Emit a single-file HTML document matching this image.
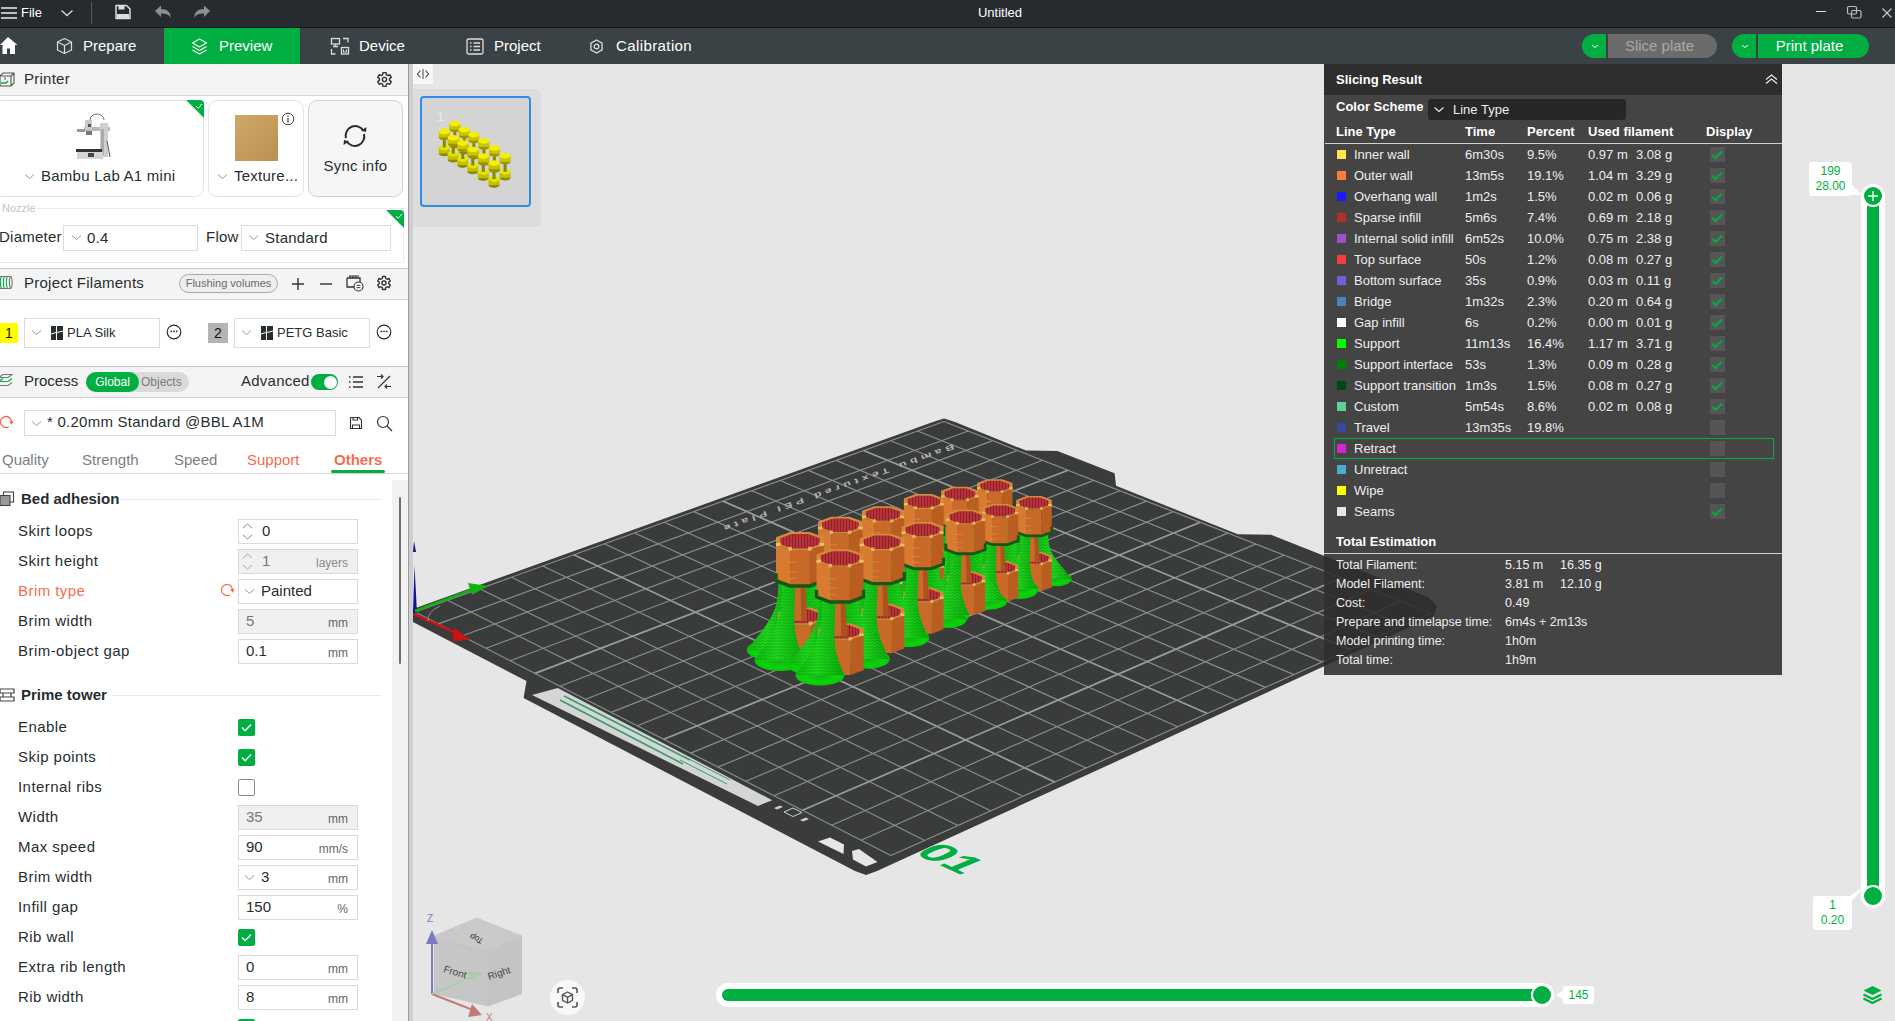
<!DOCTYPE html>
<html><head><meta charset="utf-8">
<style>
*{box-sizing:border-box;margin:0;padding:0}
html,body{width:1895px;height:1021px;overflow:hidden;background:#e6e6e6;font-family:"Liberation Sans",sans-serif;color:#262e30}
.a{position:absolute}
#title{left:0;top:0;width:1895px;height:28px;background:#262b2e;border-bottom:1px solid #121416}
#tabs{left:0;top:28px;width:1895px;height:36px;background:#3b4245}
#left{left:0;top:64px;width:408px;height:957px;background:#fff;overflow:hidden}
#sep{left:408px;top:64px;width:5px;height:957px;background:#cfcfcf;border-left:1px solid #9a9a9a}
#view{left:413px;top:64px;width:1482px;height:957px;background:#e6e6e6;overflow:hidden}
.tt{color:#fff;font-size:15px;top:0;line-height:36px}
.hdr{left:0;width:408px;height:31px;background:#f4f4f4;border-bottom:1px solid #d8d8d8;border-top:1px solid #e6e6e6}
.ht{left:24px;font-size:15px;line-height:30px;color:#262e30}

.t15{font-size:15px;color:#262e30;white-space:nowrap;letter-spacing:.25px}
.box{border:1px solid #dcdcdc;background:#fff}
.chev{position:absolute}
</style></head><body>
<div id="title" class="a">
<svg class="a" style="left:0;top:5px" width="18" height="16" viewBox="0 0 18 16"><path d="M1 3h16M1 8h16M1 13h16" stroke="#eee" stroke-width="1.6"/></svg>
<div class="a" style="left:21px;top:0;line-height:26px;font-size:13px;color:#fff">File</div>
<svg class="a" style="left:60px;top:8px" width="14" height="10" viewBox="0 0 14 10"><path d="M1.5 2.5l5.5 5 5.5-5" stroke="#ddd" stroke-width="1.3" fill="none"/></svg>
<div class="a" style="left:91px;top:2px;width:1px;height:22px;background:#555b5e"></div>
<svg class="a" style="left:114px;top:3px" width="18" height="18" viewBox="0 0 18 18"><path d="M2 2.5h10.5l3.5 3.5v9.5H2z" stroke="#ddd" stroke-width="1.5" fill="none" stroke-linejoin="round"/><rect x="4.5" y="3" width="6" height="3.5" fill="#ddd"/><rect x="3" y="11" width="12" height="4" fill="#ddd"/></svg>
<svg class="a" style="left:154px;top:5px" width="18" height="14" viewBox="0 0 18 14"><path d="M1 6l6-5.5v3.5c6 0 9.5 3 10 9-2-3.5-5-4.5-10-4.5V12z" fill="#8a8f91"/></svg>
<svg class="a" style="left:193px;top:5px" width="18" height="14" viewBox="0 0 18 14"><path d="M17 6l-6-5.5v3.5c-6 0-9.5 3-10 9 2-3.5 5-4.5 10-4.5V12z" fill="#8a8f91"/></svg>
<div class="a" style="left:950px;width:100px;text-align:center;top:0;line-height:25px;font-size:13px;color:#fff">Untitled</div>
<div class="a" style="left:1816px;top:11px;width:10px;height:1.3px;background:#ddd"></div>
<svg class="a" style="left:1845px;top:5px" width="18" height="15" viewBox="0 0 18 15"><rect x="2.5" y="1.5" width="9" height="7.5" rx="1.5" stroke="#bbb" stroke-width="1.2" fill="none"/><rect x="6.5" y="5.5" width="9.5" height="7.5" rx="1.5" stroke="#bbb" stroke-width="1.2" fill="none"/></svg>
<svg class="a" style="left:1881px;top:7px" width="12" height="12" viewBox="0 0 12 12"><path d="M1.5 1.5l9 9M10.5 1.5l-9 9" stroke="#ccc" stroke-width="1.1"/></svg>
</div>
<div id="tabs" class="a">
<svg class="a" style="left:0;top:8px" width="18" height="20" viewBox="0 0 18 20"><path d="M8 1L0 9h2.5v9H7v-5.5h3V18h5V9h2.5z" fill="#fff"/></svg>
<svg class="a" style="left:56px;top:9px" width="17" height="18" viewBox="0 0 17 18"><path d="M8.5 1.5l7 3.5v8l-7 3.5-7-3.5v-8zM1.5 5l7 3.5 7-3.5M8.5 8.5v8" stroke="#ddd" stroke-width="1.2" fill="none" stroke-linejoin="round"/></svg>
<div class="a tt" style="left:83px">Prepare</div>
<div class="a" style="left:164px;top:0;width:136px;height:36px;background:#00ae42"></div>
<svg class="a" style="left:191px;top:10px" width="17" height="17" viewBox="0 0 17 17"><path d="M8.5 1l7 4-7 4-7-4zM1.5 8.5l7 4 7-4M1.5 12l7 4 7-4" stroke="#fff" stroke-width="1.1" fill="none" stroke-linejoin="round"/></svg>
<div class="a tt" style="left:219px">Preview</div>
<svg class="a" style="left:330px;top:9px" width="20" height="18" viewBox="0 0 20 18"><rect x="1.5" y="1.5" width="8" height="5.5" stroke="#ddd" stroke-width="1.3" fill="none"/><path d="M5.5 7v2.5M3 9.5h5M13 1.5h5v4M1.5 12v5h4" stroke="#ddd" stroke-width="1.3" fill="none"/><rect x="11.5" y="10.5" width="7" height="6.5" stroke="#ddd" stroke-width="1.3" fill="none"/><path d="M13.5 12.5v2.5h3v-2.5" stroke="#ddd" stroke-width="1.1" fill="none"/></svg>
<div class="a tt" style="left:359px">Device</div>
<svg class="a" style="left:466px;top:10px" width="18" height="17" viewBox="0 0 18 17"><rect x="1" y="1" width="16" height="15" rx="1.5" stroke="#ddd" stroke-width="1.3" fill="none"/><path d="M4 5h1.5M4 8.5h1.5M4 12h1.5M7.5 5H14M7.5 8.5H14M7.5 12H14" stroke="#ddd" stroke-width="1.3"/></svg>
<div class="a tt" style="left:494px">Project</div>
<svg class="a" style="left:589px;top:11px" width="15" height="15" viewBox="0 0 15 15"><path d="M7.5 1l5.6 3.2v6.6L7.5 14 1.9 10.8V4.2z" stroke="#ddd" stroke-width="1.3" fill="none"/><circle cx="7.5" cy="7.5" r="2.3" stroke="#ddd" stroke-width="1.3" fill="none"/></svg>
<div class="a tt" style="left:616px;letter-spacing:.4px">Calibration</div>
<div class="a" style="left:1582px;top:6px;width:24px;height:24px;border-radius:12px 0 0 12px;background:#00ae42"></div>
<svg class="a" style="left:1589px;top:14px" width="12" height="8" viewBox="0 0 12 8"><path d="M3 3l3 2.5L9 3" stroke="#fff" stroke-width="1" fill="none"/></svg>
<div class="a" style="left:1608px;top:6px;width:109px;height:24px;border-radius:0 12px 12px 0;background:#6b6b6b;color:#a9a9a9;font-size:15px;line-height:24px;text-align:center;padding-right:6px">Slice plate</div>
<div class="a" style="left:1732px;top:6px;width:24px;height:24px;border-radius:12px 0 0 12px;background:#00ae42"></div>
<svg class="a" style="left:1739px;top:14px" width="12" height="8" viewBox="0 0 12 8"><path d="M3 3l3 2.5L9 3" stroke="#fff" stroke-width="1" fill="none"/></svg>
<div class="a" style="left:1758px;top:6px;width:111px;height:24px;border-radius:0 12px 12px 0;background:#00ae42;color:#fff;font-size:15px;line-height:24px;text-align:center;padding-right:8px">Print plate</div>
</div>
<div id="left" class="a"></div>
<div class="a hdr" style="top:64px;height:32px;border-top:none"></div>
<svg class="a" style="left:-1px;top:72px" width="16" height="15" viewBox="0 0 16 15"><path d="M1 4l3-3h11v10l-3 3H1z M1 4h11v10M12 4l3-3" stroke="#555" stroke-width="1.1" fill="none"/><path d="M2 11h5l2-2" stroke="#00ae42" stroke-width="1.5" fill="none"/><path d="M6 5v3" stroke="#555" stroke-width="1"/></svg>
<div class="a t15" style="left:24px;top:70px;line-height:18px">Printer</div>
<svg class="a" style="left:376px;top:71px" width="17" height="17" viewBox="0 0 24 24"><path d="M9.50,5.14 L9.75,2.26 L14.25,2.26 L14.50,5.14 L16.69,6.41 L19.31,5.18 L21.56,9.08 L19.19,10.73 L19.19,13.27 L21.56,14.92 L19.31,18.82 L16.69,17.59 L14.50,18.86 L14.25,21.74 L9.75,21.74 L9.50,18.86 L7.31,17.59 L4.69,18.82 L2.44,14.92 L4.81,13.27 L4.81,10.73 L2.44,9.08 L4.69,5.18 L7.31,6.41Z" stroke="#333" stroke-width="2" fill="none" stroke-linejoin="round"/><circle cx="12" cy="12" r="3" stroke="#333" stroke-width="2" fill="none"/></svg>
<div class="a" style="left:-8px;top:100px;width:212px;height:97px;border:1px solid #e4e4e4;border-radius:9px;background:#fff"></div>
<svg class="a" style="left:186px;top:100px" width="18" height="18" viewBox="0 0 18 18"><path d="M0 0h14a4 4 0 0 1 4 4v14z" fill="#00ae42"/><path d="M10 6l2.2 2.2L16 4" stroke="#fff" stroke-width="1" fill="none"/></svg>
<svg class="a" style="left:76px;top:111px" width="38" height="50" viewBox="0 0 38 50">
<path d="M14 9 a7 6 0 0 1 14 0" stroke="#444" stroke-width="0.8" fill="none"/>
<rect x="8" y="16" width="26" height="4" fill="#b9b9b9"/><rect x="1" y="18" width="8" height="3" fill="#999"/><rect x="9" y="9" width="7" height="10" fill="#c8c8c8"/><rect x="12" y="13" width="3" height="3" fill="#555"/>
<rect x="24" y="12" width="8" height="34" fill="#cfcfcf"/><rect x="25" y="18" width="3" height="26" fill="#aaa"/>
<path d="M31 30 l3 16" stroke="#444" stroke-width="0.9"/>
<rect x="0" y="38" width="26" height="3" fill="#333"/><rect x="1" y="41" width="26" height="7" fill="#d4d4d4"/><rect x="12" y="42" width="6" height="4" fill="#444"/>
<rect x="10" y="20" width="6" height="4" fill="#777"/>
</svg>
<svg class="a" style="left:24px;top:173px" width="11" height="7" viewBox="0 0 11 7"><path d="M1 1.5l4.5 4 4.5-4" stroke="#999" stroke-width="1" fill="none"/></svg>
<div class="a t15" style="left:41px;top:167px;line-height:18px">Bambu Lab A1 mini</div>
<div class="a" style="left:208px;top:100px;width:96px;height:97px;border:1px solid #e4e4e4;border-radius:9px;background:#fff"></div>
<div class="a" style="left:235px;top:115px;width:43px;height:46px;background:linear-gradient(135deg,#cfa96a,#c29a5a 60%,#b89152)"></div>
<svg class="a" style="left:281px;top:112px" width="14" height="14" viewBox="0 0 14 14"><circle cx="7" cy="7" r="5.8" stroke="#444" stroke-width="1" fill="none"/><path d="M7 6v4.5" stroke="#444" stroke-width="1.3"/><circle cx="7" cy="4" r=".8" fill="#444"/></svg>
<svg class="a" style="left:217px;top:173px" width="11" height="7" viewBox="0 0 11 7"><path d="M1 1.5l4.5 4 4.5-4" stroke="#999" stroke-width="1" fill="none"/></svg>
<div class="a t15" style="left:234px;top:167px;line-height:18px">Texture...</div>
<div class="a" style="left:308px;top:100px;width:95px;height:97px;border:1px solid #d2d2d2;border-radius:9px;background:#f6f6f6"></div>
<svg class="a" style="left:340px;top:122px" width="30" height="28" viewBox="0 0 30 28"><path d="M6 16 A9.5 9.5 0 0 1 23.5 9" stroke="#262e30" stroke-width="2" fill="none"/><path d="M24 12 A9.5 9.5 0 0 1 6.5 19" stroke="#262e30" stroke-width="2" fill="none"/><path d="M21 8.5l5 1.5 .5-5z" fill="#262e30"/><path d="M9 19.5l-5-1.5-.5 5z" fill="#262e30"/></svg>
<div class="a t15" style="left:308px;width:95px;text-align:center;top:157px;line-height:18px">Sync info</div>
<div class="a" style="left:2px;top:202px;font-size:11px;color:#c4c4c4;line-height:13px">Nozzle</div>
<div class="a" style="left:-2px;top:208px;width:406px;height:55px;border:1px solid #ececec;border-top:none"></div><div class="a" style="left:37px;top:208px;width:367px;height:1px;background:#ececec"></div>
<svg class="a" style="left:386px;top:210px" width="18" height="18" viewBox="0 0 18 18"><path d="M0 0h14a4 4 0 0 1 4 4v14z" fill="#00ae42"/><path d="M10 6l2.2 2.2L16 4" stroke="#fff" stroke-width="1" fill="none"/></svg>
<div class="a t15" style="left:-1px;top:228px;line-height:18px">Diameter</div>
<div class="a box" style="left:63px;top:225px;width:135px;height:26px"></div>
<svg class="a" style="left:71px;top:234px" width="11" height="7" viewBox="0 0 11 7"><path d="M1 1.5l4.5 4 4.5-4" stroke="#999" stroke-width="1" fill="none"/></svg>
<div class="a t15" style="left:87px;top:229px;line-height:18px">0.4</div>
<div class="a t15" style="left:206px;top:228px;line-height:18px">Flow</div>
<div class="a box" style="left:241px;top:225px;width:150px;height:26px"></div>
<svg class="a" style="left:248px;top:234px" width="11" height="7" viewBox="0 0 11 7"><path d="M1 1.5l4.5 4 4.5-4" stroke="#999" stroke-width="1" fill="none"/></svg>
<div class="a t15" style="left:265px;top:229px;line-height:18px">Standard</div>


<div class="a hdr" style="top:268px;height:32px;border-top:1px solid #c8c8c8;border-bottom:1px solid #d2d2d2"></div>
<svg class="a" style="left:-1px;top:275px" width="16" height="15" viewBox="0 0 16 15"><path d="M2.5 1.5c-1.5 2-1.5 10 0 12M5.5 1.5c-1.5 2-1.5 10 0 12M8.5 1.5c-1.5 2-1.5 10 0 12" stroke="#00ae42" stroke-width="1.1" fill="none"/><path d="M11.5 1.5c-1.5 2-1.5 10 0 12M12 1.5c1.5 2 1.5 10 0 12M1 1.5h11M1 13.5h11" stroke="#777" stroke-width="1.1" fill="none"/></svg>
<div class="a t15" style="left:24px;top:274px;line-height:18px">Project Filaments</div>
<div class="a" style="left:179px;top:274px;width:99px;height:19px;border:1px solid #aaa;border-radius:10px;background:#eee;font-size:11px;color:#6b6b6b;text-align:center;line-height:17px">Flushing volumes</div>
<svg class="a" style="left:291px;top:277px" width="14" height="14" viewBox="0 0 14 14"><path d="M7 1v12M1 7h12" stroke="#333" stroke-width="1.4"/></svg>
<svg class="a" style="left:319px;top:277px" width="14" height="14" viewBox="0 0 14 14"><path d="M1 7h12" stroke="#333" stroke-width="1.4"/></svg>
<svg class="a" style="left:345px;top:274px" width="19" height="18" viewBox="0 0 19 18"><path d="M2 4h13v4M2 4v9h7" stroke="#333" stroke-width="1.3" fill="none"/><path d="M4 2h10M5 2v2M8 2v2M11 2v2" stroke="#333" stroke-width="1.2"/><circle cx="13.5" cy="12.5" r="4.5" stroke="#333" stroke-width="1.2" fill="#fff"/><path d="M11.5 11.3h4M15.5 13.7h-4" stroke="#333" stroke-width="1"/></svg>
<svg class="a" style="left:376px;top:275px" width="16" height="16" viewBox="0 0 24 24"><path d="M9.50,5.14 L9.75,2.26 L14.25,2.26 L14.50,5.14 L16.69,6.41 L19.31,5.18 L21.56,9.08 L19.19,10.73 L19.19,13.27 L21.56,14.92 L19.31,18.82 L16.69,17.59 L14.50,18.86 L14.25,21.74 L9.75,21.74 L9.50,18.86 L7.31,17.59 L4.69,18.82 L2.44,14.92 L4.81,13.27 L4.81,10.73 L2.44,9.08 L4.69,5.18 L7.31,6.41Z" stroke="#333" stroke-width="2" fill="none" stroke-linejoin="round"/><circle cx="12" cy="12" r="3" stroke="#333" stroke-width="2" fill="none"/></svg>
<div class="a" style="left:0;top:323px;width:18px;height:20px;background:#ffff00;font-size:14px;line-height:20px;text-align:center;color:#111">1</div>
<div class="a box" style="left:24px;top:318px;width:136px;height:30px"></div>
<svg class="a" style="left:31px;top:329px" width="11" height="7" viewBox="0 0 11 7"><path d="M1 1.5l4.5 4 4.5-4" stroke="#999" stroke-width="1" fill="none"/></svg><svg class="a" style="left:51px;top:326px" width="12" height="14" viewBox="0 0 12 14"><rect x="0" y="0" width="5" height="14" fill="#262e30"/><rect x="6" y="0" width="6" height="14" fill="#262e30"/><path d="M0 8l5-1.5M6 6.5L12 5" stroke="#fff" stroke-width="1"/></svg>
<div class="a" style="left:67px;top:324px;font-size:13px;line-height:17px;color:#262e30">PLA Silk</div>
<svg class="a" style="left:166px;top:324px" width="16" height="16" viewBox="0 0 16 16"><circle cx="8" cy="8" r="6.8" stroke="#262e30" stroke-width="1.2" fill="none"/><circle cx="5.3" cy="7.3" r=".9" fill="#262e30"/><circle cx="8" cy="7.3" r=".9" fill="#262e30"/><circle cx="10.7" cy="7.3" r=".9" fill="#262e30"/></svg>
<div class="a" style="left:208px;top:323px;width:20px;height:20px;background:#b4b4b4;font-size:14px;line-height:20px;text-align:center;color:#111">2</div>
<div class="a box" style="left:234px;top:318px;width:136px;height:30px"></div>
<svg class="a" style="left:241px;top:329px" width="11" height="7" viewBox="0 0 11 7"><path d="M1 1.5l4.5 4 4.5-4" stroke="#999" stroke-width="1" fill="none"/></svg><svg class="a" style="left:261px;top:326px" width="12" height="14" viewBox="0 0 12 14"><rect x="0" y="0" width="5" height="14" fill="#262e30"/><rect x="6" y="0" width="6" height="14" fill="#262e30"/><path d="M0 8l5-1.5M6 6.5L12 5" stroke="#fff" stroke-width="1"/></svg>
<div class="a" style="left:277px;top:324px;font-size:13px;line-height:17px;color:#262e30">PETG Basic</div>
<svg class="a" style="left:376px;top:324px" width="16" height="16" viewBox="0 0 16 16"><circle cx="8" cy="8" r="6.8" stroke="#262e30" stroke-width="1.2" fill="none"/><circle cx="5.3" cy="7.3" r=".9" fill="#262e30"/><circle cx="8" cy="7.3" r=".9" fill="#262e30"/><circle cx="10.7" cy="7.3" r=".9" fill="#262e30"/></svg>
<div class="a hdr" style="top:366px;height:32px;border-top:1px solid #c8c8c8;border-bottom:1px solid #d2d2d2"></div>
<svg class="a" style="left:-2px;top:373px" width="16" height="16" viewBox="0 0 16 16"><path d="M1 4.5l4-3h9l-4 3z" stroke="#777" stroke-width="1.1" fill="none"/><path d="M1 8.5l4-3M14 5.5l-4 3H1" stroke="#00ae42" stroke-width="1.2" fill="none"/><path d="M1 12.5h9l4-3" stroke="#777" stroke-width="1.1" fill="none"/></svg>
<div class="a t15" style="left:24px;top:372px;line-height:18px;letter-spacing:0">Process</div>
<div class="a" style="left:86px;top:372px;width:103px;height:20px;border-radius:10px;background:#dadada"></div>
<div class="a" style="left:86px;top:372px;width:53px;height:20px;border-radius:10px;background:#00ae42;color:#fff;font-size:12px;line-height:20px;text-align:center">Global</div>
<div class="a" style="left:141px;top:372px;font-size:12px;line-height:20px;color:#7a7a7a">Objects</div>
<div class="a t15" style="left:241px;top:372px;line-height:18px">Advanced</div>
<div class="a" style="left:311px;top:374px;width:27px;height:16px;border-radius:8px;background:#00ae42"></div>
<div class="a" style="left:324px;top:375.5px;width:13px;height:13px;border-radius:50%;background:#fff"></div>
<svg class="a" style="left:348px;top:375px" width="16" height="14" viewBox="0 0 16 14"><path d="M1 2h1.5M1 7h1.5M1 12h1.5M5 2h10M5 7h10M5 12h10" stroke="#333" stroke-width="1.4"/></svg>
<svg class="a" style="left:376px;top:374px" width="16" height="16" viewBox="0 0 16 16"><path d="M2 14L14 2M1 2.5h6M5 0.5l2 2-2 2M15 12.5H9M11 10.5l-2 2 2 2" stroke="#333" stroke-width="1.2" fill="none"/></svg>
<svg class="a" style="left:-1px;top:415px" width="15" height="15" viewBox="0 0 15 15"><path d="M9.75 11.76A5.5 5.5 0 1 1 12.5 7" stroke="#f0694f" stroke-width="1.3" fill="none"/><path d="M10.2 6.3h4.6l-2.3 3.4z" fill="#f0694f"/></svg>
<div class="a box" style="left:24px;top:410px;width:312px;height:26px"></div>
<svg class="a" style="left:31px;top:420px" width="11" height="7" viewBox="0 0 11 7"><path d="M1 1.5l4.5 4 4.5-4" stroke="#999" stroke-width="1" fill="none"/></svg>
<div class="a t15" style="left:47px;top:413px;line-height:18px">* 0.20mm Standard @BBL A1M</div>
<svg class="a" style="left:349px;top:416px" width="14" height="14" viewBox="0 0 14 14"><path d="M1.5 1.5h8.5l2.5 2.5v8.5h-11z" stroke="#333" stroke-width="1.1" fill="none"/><path d="M4 1.5v2.5h4.5V1.5M3.5 12.5V9h7v3.5" stroke="#333" stroke-width="1.1" fill="none"/></svg>
<svg class="a" style="left:376px;top:415px" width="17" height="17" viewBox="0 0 17 17"><circle cx="7" cy="7" r="5.5" stroke="#333" stroke-width="1.2" fill="none"/><path d="M11 11l5 5" stroke="#333" stroke-width="1.2"/></svg>
<div class="a" style="left:0;top:451px;line-height:18px;font-size:15px;color:#7b7f82;left:2px">Quality</div>
<div class="a" style="left:82px;top:451px;line-height:18px;font-size:15px;color:#7b7f82">Strength</div>
<div class="a" style="left:174px;top:451px;line-height:18px;font-size:15px;color:#7b7f82">Speed</div>
<div class="a" style="left:247px;top:451px;line-height:18px;font-size:15px;color:#f26e4f">Support</div>
<div class="a" style="left:334px;top:451px;line-height:18px;font-size:15px;color:#f26e4f;font-weight:bold">Others</div>
<div class="a" style="left:0;top:473px;width:408px;height:1px;background:#d4d4d4"></div>
<div class="a" style="left:331px;top:470px;width:54px;height:3px;border-radius:2px;background:#00ae42"></div>
<div class="a" style="left:392px;top:480px;width:16px;height:541px;background:#f2f2f2"></div>
<div class="a" style="left:399px;top:497px;width:2px;height:167px;background:#6f6f6f;border-radius:1px"></div>
<svg class="a" style="left:-1px;top:491px" width="16" height="16" viewBox="0 0 16 16"><rect x="4.5" y="1" width="10" height="10" stroke="#444" stroke-width="1.1" fill="#fff"/><rect x="1" y="4.5" width="10" height="10" stroke="#444" stroke-width="1.1" fill="#999"/></svg>
<div class="a" style="left:21px;top:490px;line-height:18px;font-size:15px;font-weight:bold;color:#262e30">Bed adhesion</div>
<div class="a" style="left:120px;top:499px;width:261px;height:1px;background:#e6e6e6"></div>
<div class="a" style="left:18px;top:522px;line-height:18px;font-size:15px;color:#262e30;white-space:nowrap;letter-spacing:.45px">Skirt loops</div>
<div class="a" style="left:238px;top:519px;width:120px;height:25px;border:1px solid #dadada;background:#fff"></div>
<svg class="a" style="left:241px;top:522px" width="13" height="19" viewBox="0 0 13 19"><path d="M2 6l4.5-4 4.5 4M2 13l4.5 4 4.5-4" stroke="#888" stroke-width="1" fill="none"/></svg>
<div class="a" style="left:262px;top:522px;line-height:18px;font-size:15px;color:#262e30">0</div>
<div class="a" style="left:18px;top:552px;line-height:18px;font-size:15px;color:#262e30;white-space:nowrap;letter-spacing:.45px">Skirt height</div>
<div class="a" style="left:238px;top:549px;width:120px;height:25px;border:1px solid #dadada;background:#f0f0f0"></div>
<svg class="a" style="left:241px;top:552px" width="13" height="19" viewBox="0 0 13 19"><path d="M2 6l4.5-4 4.5 4M2 13l4.5 4 4.5-4" stroke="#aaa" stroke-width="1" fill="none"/></svg>
<div class="a" style="left:262px;top:552px;line-height:18px;font-size:15px;color:#777">1</div>
<div class="a" style="left:238px;width:110px;text-align:right;top:554px;line-height:18px;font-size:12px;color:#8a8a8a">layers</div>
<div class="a" style="left:18px;top:582px;line-height:18px;font-size:15px;color:#f26e4f;white-space:nowrap;letter-spacing:.45px">Brim type</div>
<div class="a" style="left:238px;top:579px;width:120px;height:25px;border:1px solid #dadada;background:#fff"></div>
<svg class="a" style="left:244px;top:588px" width="11" height="7" viewBox="0 0 11 7"><path d="M1 1.5l4.5 4 4.5-4" stroke="#999" stroke-width="1" fill="none"/></svg>
<div class="a" style="left:261px;top:582px;line-height:18px;font-size:15px;color:#262e30">Painted</div>
<svg class="a" style="left:220px;top:583px" width="15" height="15" viewBox="0 0 15 15"><path d="M9.75 11.76A5.5 5.5 0 1 1 12.5 7" stroke="#f0694f" stroke-width="1.2" fill="none"/><path d="M10.2 6.3h4.6l-2.3 3.4z" fill="#f0694f"/></svg>
<div class="a" style="left:18px;top:612px;line-height:18px;font-size:15px;color:#262e30;white-space:nowrap;letter-spacing:.45px">Brim width</div>
<div class="a" style="left:238px;top:609px;width:120px;height:25px;border:1px solid #dadada;background:#f0f0f0"></div>
<div class="a" style="left:246px;top:612px;line-height:18px;font-size:15px;color:#777">5</div>
<div class="a" style="left:238px;width:110px;text-align:right;top:614px;line-height:18px;font-size:12px;color:#666">mm</div>
<div class="a" style="left:18px;top:642px;line-height:18px;font-size:15px;color:#262e30;white-space:nowrap;letter-spacing:.45px">Brim-object gap</div>
<div class="a" style="left:238px;top:639px;width:120px;height:25px;border:1px solid #dadada;background:#fff"></div>
<div class="a" style="left:246px;top:642px;line-height:18px;font-size:15px;color:#262e30">0.1</div>
<div class="a" style="left:238px;width:110px;text-align:right;top:644px;line-height:18px;font-size:12px;color:#666">mm</div>
<svg class="a" style="left:-1px;top:687px" width="16" height="16" viewBox="0 0 16 16"><path d="M1 2h14v4H1zM4 6v4M12 6v4M1 10h14v4H1z" stroke="#444" stroke-width="1.2" fill="none"/></svg>
<div class="a" style="left:21px;top:686px;line-height:18px;font-size:15px;font-weight:bold;color:#262e30">Prime tower</div>
<div class="a" style="left:112px;top:695px;width:269px;height:1px;background:#e6e6e6"></div>
<div class="a" style="left:18px;top:718px;line-height:18px;font-size:15px;color:#262e30;white-space:nowrap;letter-spacing:.45px">Enable</div>
<svg class="a" style="left:238px;top:719px" width="17" height="17" viewBox="0 0 17 17"><rect x="0" y="0" width="17" height="17" rx="2" fill="#00ae42"/><path d="M4 8.5l3.2 3.2L13 5.5" stroke="#fff" stroke-width="1.4" fill="none"/></svg>
<div class="a" style="left:18px;top:748px;line-height:18px;font-size:15px;color:#262e30;white-space:nowrap;letter-spacing:.45px">Skip points</div>
<svg class="a" style="left:238px;top:749px" width="17" height="17" viewBox="0 0 17 17"><rect x="0" y="0" width="17" height="17" rx="2" fill="#00ae42"/><path d="M4 8.5l3.2 3.2L13 5.5" stroke="#fff" stroke-width="1.4" fill="none"/></svg>
<div class="a" style="left:18px;top:778px;line-height:18px;font-size:15px;color:#262e30;white-space:nowrap;letter-spacing:.45px">Internal ribs</div>
<div class="a" style="left:238px;top:779px;width:17px;height:17px;border:1px solid #8a8a8a;border-radius:2px;background:#fff"></div>
<div class="a" style="left:18px;top:808px;line-height:18px;font-size:15px;color:#262e30;white-space:nowrap;letter-spacing:.45px">Width</div>
<div class="a" style="left:238px;top:805px;width:120px;height:25px;border:1px solid #dadada;background:#f0f0f0"></div>
<div class="a" style="left:246px;top:808px;line-height:18px;font-size:15px;color:#777">35</div>
<div class="a" style="left:238px;width:110px;text-align:right;top:810px;line-height:18px;font-size:12px;color:#666">mm</div>
<div class="a" style="left:18px;top:838px;line-height:18px;font-size:15px;color:#262e30;white-space:nowrap;letter-spacing:.45px">Max speed</div>
<div class="a" style="left:238px;top:835px;width:120px;height:25px;border:1px solid #dadada;background:#fff"></div>
<div class="a" style="left:246px;top:838px;line-height:18px;font-size:15px;color:#262e30">90</div>
<div class="a" style="left:238px;width:110px;text-align:right;top:840px;line-height:18px;font-size:12px;color:#666">mm/s</div>
<div class="a" style="left:18px;top:868px;line-height:18px;font-size:15px;color:#262e30;white-space:nowrap;letter-spacing:.45px">Brim width</div>
<div class="a" style="left:238px;top:865px;width:120px;height:25px;border:1px solid #dadada;background:#fff"></div>
<svg class="a" style="left:244px;top:874px" width="11" height="7" viewBox="0 0 11 7"><path d="M1 1.5l4.5 4 4.5-4" stroke="#999" stroke-width="1" fill="none"/></svg>
<div class="a" style="left:261px;top:868px;line-height:18px;font-size:15px;color:#262e30">3</div>
<div class="a" style="left:238px;width:110px;text-align:right;top:870px;line-height:18px;font-size:12px;color:#666">mm</div>
<div class="a" style="left:18px;top:898px;line-height:18px;font-size:15px;color:#262e30;white-space:nowrap;letter-spacing:.45px">Infill gap</div>
<div class="a" style="left:238px;top:895px;width:120px;height:25px;border:1px solid #dadada;background:#fff"></div>
<div class="a" style="left:246px;top:898px;line-height:18px;font-size:15px;color:#262e30">150</div>
<div class="a" style="left:238px;width:110px;text-align:right;top:900px;line-height:18px;font-size:12px;color:#666">%</div>
<div class="a" style="left:18px;top:928px;line-height:18px;font-size:15px;color:#262e30;white-space:nowrap;letter-spacing:.45px">Rib wall</div>
<svg class="a" style="left:238px;top:929px" width="17" height="17" viewBox="0 0 17 17"><rect x="0" y="0" width="17" height="17" rx="2" fill="#00ae42"/><path d="M4 8.5l3.2 3.2L13 5.5" stroke="#fff" stroke-width="1.4" fill="none"/></svg>
<div class="a" style="left:18px;top:958px;line-height:18px;font-size:15px;color:#262e30;white-space:nowrap;letter-spacing:.45px">Extra rib length</div>
<div class="a" style="left:238px;top:955px;width:120px;height:25px;border:1px solid #dadada;background:#fff"></div>
<div class="a" style="left:246px;top:958px;line-height:18px;font-size:15px;color:#262e30">0</div>
<div class="a" style="left:238px;width:110px;text-align:right;top:960px;line-height:18px;font-size:12px;color:#666">mm</div>
<div class="a" style="left:18px;top:988px;line-height:18px;font-size:15px;color:#262e30;white-space:nowrap;letter-spacing:.45px">Rib width</div>
<div class="a" style="left:238px;top:985px;width:120px;height:25px;border:1px solid #dadada;background:#fff"></div>
<div class="a" style="left:246px;top:988px;line-height:18px;font-size:15px;color:#262e30">8</div>
<div class="a" style="left:238px;width:110px;text-align:right;top:990px;line-height:18px;font-size:12px;color:#666">mm</div>
<div class="a" style="left:18px;top:1018px;line-height:18px;font-size:15px;color:#262e30;white-space:nowrap;letter-spacing:.45px">Fillet wall</div>
<svg class="a" style="left:238px;top:1019px" width="17" height="17" viewBox="0 0 17 17"><rect x="0" y="0" width="17" height="17" rx="2" fill="#00ae42"/><path d="M4 8.5l3.2 3.2L13 5.5" stroke="#fff" stroke-width="1.4" fill="none"/></svg>
<div id="sep" class="a"></div>
<div id="view" class="a"></div>
<!--VIEW-->
<svg class="a" style="left:413px;top:64px" width="1482" height="957" viewBox="413 64 1482 957">
<path d="M413.0,609.0 L933.0,422.0 L944.0,418.5 L955.0,422.0 L1026.0,450.6 L1057.4,451.0 L1114.6,473.3 L1116.0,485.8 L1237.8,534.3 L1271.0,534.8 L1428.0,597.0 L1437.0,606.0 L1434.0,616.0 L877.0,871.0 L866.0,875.0 L855.0,871.0 L523.6,698.0 L526.5,681.0 L413.0,622.0Z" fill="#3a3b3b"/>
<path d="M818,841.5 L830,837.5 L844,844.5 L843.5,854 Z" fill="#e6e6e6"/>
<path d="M852,851 L859,849 L877.5,862 L866,866.6 L853,859.5 Z" fill="#e6e6e6"/>
<path d="M532,695 L557.7,688 L772.2,800.2 L758,806 Z" fill="#d4d6d6"/>
<path d="M560,700 L683,764 M564,696 L690,760" stroke="#3a9a6a" stroke-width="1.6"/>
<path d="M680,760 L727,784 M683,756 L730,780" stroke="#3a9a6a" stroke-width="1"/>
<path d="M784,812 l9,-4 l9,4.5 l-9,4z" stroke="#cfcfcf" stroke-width="1" fill="none"/><path d="M774,808 l6,-2.5 l3,1.5 l-6,2.5z M800,820 l6,-2.5 l3,1.5 l-6,2.5z" fill="#cfcfcf"/>
<path d="M415.0,612.0 L944.0,421.5" stroke="#8a8f8f" stroke-width="1.15"/>
<path d="M415.0,612.0 L891.0,855.6" stroke="#8a8f8f" stroke-width="1.15"/>
<path d="M438.3,623.9 L968.2,431.0" stroke="#8a8f8f" stroke-width="1.15"/>
<path d="M447.6,600.3 L924.7,840.5" stroke="#8a8f8f" stroke-width="1.15"/>
<path d="M462.0,636.0 L992.7,440.6" stroke="#8a8f8f" stroke-width="1.15"/>
<path d="M479.7,588.7 L957.9,825.5" stroke="#8a8f8f" stroke-width="1.15"/>
<path d="M486.0,648.3 L1017.5,450.4" stroke="#8a8f8f" stroke-width="1.15"/>
<path d="M511.5,577.3 L990.6,810.8" stroke="#8a8f8f" stroke-width="1.15"/>
<path d="M510.3,660.8 L1042.6,460.3" stroke="#8a8f8f" stroke-width="1.15"/>
<path d="M542.8,566.0 L1022.9,796.3" stroke="#8a8f8f" stroke-width="1.15"/>
<path d="M535.0,673.4 L1068.1,470.3" stroke="#9a9e9e" stroke-width="1.7"/>
<path d="M573.8,554.8 L1054.7,782.0" stroke="#9a9e9e" stroke-width="1.7"/>
<path d="M560.0,686.2 L1093.8,480.4" stroke="#8a8f8f" stroke-width="1.15"/>
<path d="M604.3,543.8 L1086.1,768.0" stroke="#8a8f8f" stroke-width="1.15"/>
<path d="M585.4,699.2 L1119.9,490.7" stroke="#8a8f8f" stroke-width="1.15"/>
<path d="M634.6,532.9 L1117.0,754.1" stroke="#8a8f8f" stroke-width="1.15"/>
<path d="M611.1,712.4 L1146.4,501.1" stroke="#8a8f8f" stroke-width="1.15"/>
<path d="M664.4,522.2 L1147.5,740.4" stroke="#8a8f8f" stroke-width="1.15"/>
<path d="M637.3,725.7 L1173.2,511.6" stroke="#8a8f8f" stroke-width="1.15"/>
<path d="M693.9,511.6 L1177.6,726.8" stroke="#8a8f8f" stroke-width="1.15"/>
<path d="M663.8,739.3 L1200.3,522.3" stroke="#9a9e9e" stroke-width="1.7"/>
<path d="M723.0,501.1 L1207.3,713.5" stroke="#9a9e9e" stroke-width="1.7"/>
<path d="M690.7,753.1 L1227.8,533.1" stroke="#8a8f8f" stroke-width="1.15"/>
<path d="M751.8,490.7 L1236.6,700.3" stroke="#8a8f8f" stroke-width="1.15"/>
<path d="M718.0,767.1 L1255.7,544.1" stroke="#8a8f8f" stroke-width="1.15"/>
<path d="M780.2,480.5 L1265.5,687.4" stroke="#8a8f8f" stroke-width="1.15"/>
<path d="M745.8,781.3 L1283.9,555.2" stroke="#8a8f8f" stroke-width="1.15"/>
<path d="M808.3,470.4 L1294.0,674.6" stroke="#8a8f8f" stroke-width="1.15"/>
<path d="M773.9,795.7 L1312.5,566.4" stroke="#8a8f8f" stroke-width="1.15"/>
<path d="M836.1,460.4 L1322.1,661.9" stroke="#8a8f8f" stroke-width="1.15"/>
<path d="M802.5,810.3 L1341.5,577.8" stroke="#9a9e9e" stroke-width="1.7"/>
<path d="M863.5,450.5 L1349.9,649.4" stroke="#9a9e9e" stroke-width="1.7"/>
<path d="M831.6,825.2 L1371.0,589.4" stroke="#8a8f8f" stroke-width="1.15"/>
<path d="M890.7,440.7 L1377.3,637.1" stroke="#8a8f8f" stroke-width="1.15"/>
<path d="M861.0,840.3 L1400.8,601.1" stroke="#8a8f8f" stroke-width="1.15"/>
<path d="M917.5,431.0 L1404.3,625.0" stroke="#8a8f8f" stroke-width="1.15"/>
<path d="M891.0,855.6 L1431.0,613.0" stroke="#8a8f8f" stroke-width="1.15"/>
<path d="M944.0,421.5 L1431.0,613.0" stroke="#8a8f8f" stroke-width="1.15"/>
<text x="0" y="0" transform="matrix(1.09,0.5,-0.99,0.41,913,853)" font-family="Liberation Sans" font-weight="bold" font-size="40" fill="#00ae42">01</text>
<text x="0" y="0" transform="translate(953,444) rotate(160.35) scale(1,0.62)" font-family="Liberation Sans" font-weight="bold" font-size="12.5" letter-spacing="3.9" fill="#b0b4b4">Bambu Textured PEI Plate</text>
<path d="M413,613 L417,613 L414.5,566 Z" fill="#14148c"/><path d="M413,552 L416,552 L414,541 Z" fill="#14148c"/>
<path d="M415,611 L474,589" stroke="#13b013" stroke-width="2.5"/><path d="M468,583 L488,586 L472,595 Z" fill="#13b013"/>
<path d="M414,614 L460,635" stroke="#c81414" stroke-width="2.5"/><path d="M455,628 L470,640 L452,641 Z" fill="#c81414"/>
<path d="M428,621 Q427,612 440,606" stroke="#8a8f8f" stroke-width="1" fill="none"/>
</svg>
<!--/VIEW-->
<!--MODELS-->
<svg class="a" style="left:413px;top:64px" width="1482" height="957" viewBox="413 64 1482 957">
<defs>
<linearGradient id="gg" x1="0" x2="1" y1="0" y2="0">
<stop offset="0" stop-color="#0fb80f"/><stop offset="0.45" stop-color="#1fd81f"/><stop offset="1" stop-color="#0aa80a"/>
</linearGradient>
<radialGradient id="bg" cx="0.5" cy="0.5" r="0.5"><stop offset="0" stop-color="#12b012"/><stop offset="0.7" stop-color="#0bd40b"/><stop offset="1" stop-color="#08c808"/></radialGradient>
<pattern id="rs" width="3" height="6" patternUnits="userSpaceOnUse"><rect width="3" height="6" fill="#b8323a"/><rect width="1" height="6" fill="#8e2028"/></pattern>
<pattern id="gs" width="5" height="3" patternUnits="userSpaceOnUse"><path d="M0 2.5 Q2.5 0.5 5 2.5" stroke="#006000" stroke-width="0.8" fill="none"/></pattern>
</defs>
<ellipse cx="1016.1" cy="562.0" rx="16.3" ry="7.4" fill="url(#bg)"/>
<path d="M996.6,516.7 C996.6,537.1 1003.9,539.8 999.8,562.0 L1032.4,562.0 C1015.0,539.8 1009.0,537.1 1009.0,516.7 Z" fill="url(#gg)"/>
<path d="M996.6,516.7 C996.6,537.1 1003.9,539.8 999.8,562.0 L1032.4,562.0 C1015.0,539.8 1009.0,537.1 1009.0,516.7 Z" fill="url(#gs)" opacity="0.35"/>
<ellipse cx="971.7" cy="566.5" rx="16.3" ry="7.4" fill="url(#bg)"/>
<path d="M978.8,516.7 C978.8,539.1 973.1,544.3 955.4,566.5 L988.0,566.5 C982.7,544.3 989.5,539.1 989.5,516.7 Z" fill="url(#gg)"/>
<path d="M978.8,516.7 C978.8,539.1 973.1,544.3 955.4,566.5 L988.0,566.5 C982.7,544.3 989.5,539.1 989.5,516.7 Z" fill="url(#gs)" opacity="0.35"/>
<polygon points="1012.6,538.7 1012.6,543.9 1012.6,570.5 1012.6,565.3" fill="#a85219"/>
<polygon points="1012.6,543.9 1002.6,547.6 1002.6,574.2 1012.6,570.5" fill="#b95d21"/>
<polygon points="1002.6,547.6 988.5,547.6 988.5,574.2 1002.6,574.2" fill="#c96a28"/>
<polygon points="988.5,547.6 978.5,543.9 978.5,570.5 988.5,574.2" fill="#d87a30"/>
<polygon points="978.5,543.9 978.5,538.7 978.5,565.3 978.5,570.5" fill="#cf732d"/>
<path d="M987.0,556.8 h6.0" stroke="#eaa050" stroke-width="0.9" opacity="0.55"/>
<path d="M987.0,564.0 h6.0" stroke="#eaa050" stroke-width="0.9" opacity="0.55"/>
<path d="M987.0,568.7 h6.0" stroke="#eaa050" stroke-width="0.9" opacity="0.55"/>
<polygon points="1012.6,543.9 1002.6,547.6 988.5,547.6 978.5,543.9 978.5,538.7 988.5,535.0 1002.6,535.0 1012.6,538.7" fill="#d48a3c"/>
<polygon points="1009.5,543.7 1001.3,546.8 989.7,546.8 981.6,543.7 981.6,539.5 989.7,536.4 1001.3,536.4 1009.5,539.5" fill="url(#rs)"/>
<circle cx="1002.6" cy="546.8" r="1.5" fill="#e8c060" opacity="0.8"/>
<circle cx="988.5" cy="546.8" r="1.5" fill="#e8c060" opacity="0.8"/>
<path d="M1012.6,543.9 l-3.4,-0.5" stroke="#e8c060" stroke-width="2.0"/>
<path d="M978.5,543.9 l3.4,-0.5" stroke="#e8c060" stroke-width="2.0"/>
<polygon points="991.2,512.4 998.4,512.4 1000.1,544.9 989.5,544.9" fill="#c86a28"/>
<polygon points="995.2,512.4 998.4,512.4 1000.1,544.9 995.7,544.9" fill="#a9541c"/>
<ellipse cx="979.7" cy="574.3" rx="18.5" ry="7.8" fill="url(#bg)"/>
<path d="M981.5,516.7 C981.5,542.6 978.6,551.0 961.2,574.3 L998.2,574.3 C987.4,551.0 991.2,542.6 991.2,516.7 Z" fill="url(#gg)"/>
<path d="M981.5,516.7 C981.5,542.6 978.6,551.0 961.2,574.3 L998.2,574.3 C987.4,551.0 991.2,542.6 991.2,516.7 Z" fill="url(#gs)" opacity="0.35"/>
<polygon points="1012.6,483.1 1012.6,488.5 1012.6,515.2 1012.6,509.7" fill="#a85219"/>
<polygon points="1012.6,488.5 1002.2,492.4 1002.2,519.0 1012.6,515.2" fill="#b95d21"/>
<polygon points="1002.2,492.4 987.4,492.4 987.4,519.0 1002.2,519.0" fill="#c96a28"/>
<polygon points="987.4,492.4 977.0,488.5 977.0,515.2 987.4,519.0" fill="#d87a30"/>
<polygon points="977.0,488.5 977.0,483.1 977.0,509.7 977.0,515.2" fill="#cf732d"/>
<path d="M985.9,501.5 h6.2" stroke="#eaa050" stroke-width="0.9" opacity="0.55"/>
<path d="M985.9,508.7 h6.2" stroke="#eaa050" stroke-width="0.9" opacity="0.55"/>
<path d="M985.9,513.5 h6.2" stroke="#eaa050" stroke-width="0.9" opacity="0.55"/>
<polyline points="1012.6,509.7 1012.6,515.2 1002.2,519.0 987.4,519.0 977.0,515.2 977.0,509.7" stroke="#145814" stroke-width="2.6" fill="none"/>
<polygon points="1012.6,488.5 1002.2,492.4 987.4,492.4 977.0,488.5 977.0,483.1 987.4,479.2 1002.2,479.2 1012.6,483.1" fill="#d48a3c"/>
<polygon points="1009.4,488.3 1000.8,491.5 988.8,491.5 980.2,488.3 980.2,483.9 988.8,480.7 1000.8,480.7 1009.4,483.9" fill="url(#rs)"/>
<circle cx="1002.2" cy="491.5" r="1.6" fill="#e8c060" opacity="0.8"/>
<circle cx="987.4" cy="491.5" r="1.6" fill="#e8c060" opacity="0.8"/>
<path d="M1012.6,488.5 l-3.6,-0.5" stroke="#e8c060" stroke-width="2.1"/>
<path d="M977.0,488.5 l3.6,-0.5" stroke="#e8c060" stroke-width="2.1"/>
<ellipse cx="982.3" cy="574.0" rx="17.2" ry="7.8" fill="url(#bg)"/>
<path d="M961.7,526.3 C961.7,547.8 969.3,550.6 965.1,574.0 L999.4,574.0 C981.1,550.6 974.8,547.8 974.8,526.3 Z" fill="url(#gg)"/>
<path d="M961.7,526.3 C961.7,547.8 969.3,550.6 965.1,574.0 L999.4,574.0 C981.1,550.6 974.8,547.8 974.8,526.3 Z" fill="url(#gs)" opacity="0.35"/>
<ellipse cx="935.5" cy="578.7" rx="17.2" ry="7.8" fill="url(#bg)"/>
<path d="M943.0,526.3 C943.0,549.9 937.0,555.3 918.3,578.7 L952.6,578.7 C947.1,555.3 954.2,549.9 954.2,526.3 Z" fill="url(#gg)"/>
<path d="M943.0,526.3 C943.0,549.9 937.0,555.3 918.3,578.7 L952.6,578.7 C947.1,555.3 954.2,549.9 954.2,526.3 Z" fill="url(#gs)" opacity="0.35"/>
<polygon points="978.6,549.4 978.6,555.0 978.6,583.0 978.6,577.5" fill="#a85219"/>
<polygon points="978.6,555.0 968.0,558.8 968.0,586.9 978.6,583.0" fill="#b95d21"/>
<polygon points="968.0,558.8 953.1,558.8 953.1,586.9 968.0,586.9" fill="#c96a28"/>
<polygon points="953.1,558.8 942.6,555.0 942.6,583.0 953.1,586.9" fill="#d87a30"/>
<polygon points="942.6,555.0 942.6,549.4 942.6,577.5 942.6,583.0" fill="#cf732d"/>
<path d="M951.6,568.5 h6.3" stroke="#eaa050" stroke-width="0.9" opacity="0.55"/>
<path d="M951.6,576.1 h6.3" stroke="#eaa050" stroke-width="0.9" opacity="0.55"/>
<path d="M951.6,581.1 h6.3" stroke="#eaa050" stroke-width="0.9" opacity="0.55"/>
<polygon points="978.6,555.0 968.0,558.8 953.1,558.8 942.6,555.0 942.6,549.4 953.1,545.6 968.0,545.6 978.6,549.4" fill="#d48a3c"/>
<polygon points="975.3,554.8 966.7,557.9 954.5,557.9 945.8,554.8 945.8,550.2 954.5,547.1 966.7,547.1 975.3,550.2" fill="url(#rs)"/>
<circle cx="968.0" cy="558.0" r="1.6" fill="#e8c060" opacity="0.8"/>
<circle cx="953.1" cy="558.0" r="1.6" fill="#e8c060" opacity="0.8"/>
<path d="M978.6,555.0 l-3.6,-0.6" stroke="#e8c060" stroke-width="2.2"/>
<path d="M942.6,555.0 l3.6,-0.6" stroke="#e8c060" stroke-width="2.2"/>
<polygon points="956.1,521.8 963.5,521.8 965.4,555.9 954.2,555.9" fill="#c86a28"/>
<polygon points="960.2,521.8 963.5,521.8 965.4,555.9 960.7,555.9" fill="#a9541c"/>
<ellipse cx="943.9" cy="587.0" rx="19.5" ry="8.2" fill="url(#bg)"/>
<path d="M945.8,526.3 C945.8,553.6 942.8,562.4 924.4,587.0 L963.4,587.0 C952.0,562.4 956.1,553.6 956.1,526.3 Z" fill="url(#gg)"/>
<path d="M945.8,526.3 C945.8,553.6 942.8,562.4 924.4,587.0 L963.4,587.0 C952.0,562.4 956.1,553.6 956.1,526.3 Z" fill="url(#gs)" opacity="0.35"/>
<polygon points="978.5,490.8 978.5,496.6 978.5,524.6 978.5,518.9" fill="#a85219"/>
<polygon points="978.5,496.6 967.6,500.6 967.6,528.7 978.5,524.6" fill="#b95d21"/>
<polygon points="967.6,500.6 952.0,500.6 952.0,528.7 967.6,528.7" fill="#c96a28"/>
<polygon points="952.0,500.6 941.1,496.6 941.1,524.6 952.0,528.7" fill="#d87a30"/>
<polygon points="941.1,496.6 941.1,490.8 941.1,518.9 941.1,524.6" fill="#cf732d"/>
<path d="M950.4,510.3 h6.6" stroke="#eaa050" stroke-width="0.9" opacity="0.55"/>
<path d="M950.4,517.8 h6.6" stroke="#eaa050" stroke-width="0.9" opacity="0.55"/>
<path d="M950.4,522.9 h6.6" stroke="#eaa050" stroke-width="0.9" opacity="0.55"/>
<polyline points="978.5,518.9 978.5,524.6 967.6,528.7 952.0,528.7 941.1,524.6 941.1,518.9" stroke="#145814" stroke-width="2.7" fill="none"/>
<polygon points="978.5,496.6 967.6,500.6 952.0,500.6 941.1,496.6 941.1,490.8 952.0,486.8 967.6,486.8 978.5,490.8" fill="#d48a3c"/>
<polygon points="975.2,496.3 966.2,499.7 953.4,499.7 944.4,496.3 944.4,491.7 953.4,488.3 966.2,488.3 975.2,491.7" fill="url(#rs)"/>
<circle cx="967.6" cy="499.7" r="1.7" fill="#e8c060" opacity="0.8"/>
<circle cx="952.0" cy="499.7" r="1.7" fill="#e8c060" opacity="0.8"/>
<path d="M978.5,496.6 l-3.7,-0.6" stroke="#e8c060" stroke-width="2.2"/>
<path d="M941.1,496.6 l3.7,-0.6" stroke="#e8c060" stroke-width="2.2"/>
<ellipse cx="947.7" cy="587.0" rx="18.3" ry="8.3" fill="url(#bg)"/>
<path d="M925.8,536.2 C925.8,559.0 934.0,562.1 929.4,587.0 L966.0,587.0 C946.5,562.1 939.7,559.0 939.7,536.2 Z" fill="url(#gg)"/>
<path d="M925.8,536.2 C925.8,559.0 934.0,562.1 929.4,587.0 L966.0,587.0 C946.5,562.1 939.7,559.0 939.7,536.2 Z" fill="url(#gs)" opacity="0.35"/>
<ellipse cx="897.9" cy="592.0" rx="18.3" ry="8.3" fill="url(#bg)"/>
<path d="M905.9,536.2 C905.9,561.3 899.5,567.1 879.6,592.0 L916.2,592.0 C910.3,567.1 917.8,561.3 917.8,536.2 Z" fill="url(#gg)"/>
<path d="M905.9,536.2 C905.9,561.3 899.5,567.1 879.6,592.0 L916.2,592.0 C910.3,567.1 917.8,561.3 917.8,536.2 Z" fill="url(#gs)" opacity="0.35"/>
<polygon points="943.8,560.8 943.8,566.7 943.8,596.6 943.8,590.7" fill="#a85219"/>
<polygon points="943.8,566.7 932.6,570.8 932.6,600.7 943.8,596.6" fill="#b95d21"/>
<polygon points="932.6,570.8 916.7,570.8 916.7,600.7 932.6,600.7" fill="#c96a28"/>
<polygon points="916.7,570.8 905.5,566.7 905.5,596.6 916.7,600.7" fill="#d87a30"/>
<polygon points="905.5,566.7 905.5,560.8 905.5,590.7 905.5,596.6" fill="#cf732d"/>
<path d="M915.1,581.1 h6.7" stroke="#eaa050" stroke-width="0.9" opacity="0.55"/>
<path d="M915.1,589.2 h6.7" stroke="#eaa050" stroke-width="0.9" opacity="0.55"/>
<path d="M915.1,594.5 h6.7" stroke="#eaa050" stroke-width="0.9" opacity="0.55"/>
<polygon points="943.8,566.7 932.6,570.8 916.7,570.8 905.5,566.7 905.5,560.8 916.7,556.7 932.6,556.7 943.8,560.8" fill="#d48a3c"/>
<polygon points="940.3,566.5 931.1,569.8 918.1,569.8 908.9,566.5 908.9,561.6 918.1,558.3 931.1,558.3 940.3,561.6" fill="url(#rs)"/>
<circle cx="932.6" cy="569.9" r="1.7" fill="#e8c060" opacity="0.8"/>
<circle cx="916.7" cy="569.9" r="1.7" fill="#e8c060" opacity="0.8"/>
<path d="M943.8,566.7 l-3.8,-0.6" stroke="#e8c060" stroke-width="2.3"/>
<path d="M905.5,566.7 l3.8,-0.6" stroke="#e8c060" stroke-width="2.3"/>
<polygon points="919.8,531.4 927.8,531.4 929.8,567.7 917.8,567.7" fill="#c86a28"/>
<polygon points="924.2,531.4 927.8,531.4 929.8,567.7 924.8,567.7" fill="#a9541c"/>
<ellipse cx="906.9" cy="600.8" rx="20.8" ry="8.7" fill="url(#bg)"/>
<path d="M908.9,536.2 C908.9,565.2 905.7,574.7 886.1,600.8 L927.6,600.8 C915.5,574.7 919.8,565.2 919.8,536.2 Z" fill="url(#gg)"/>
<path d="M908.9,536.2 C908.9,565.2 905.7,574.7 886.1,600.8 L927.6,600.8 C915.5,574.7 919.8,565.2 919.8,536.2 Z" fill="url(#gs)" opacity="0.35"/>
<polygon points="943.7,498.5 943.7,504.5 943.7,534.4 943.7,528.3" fill="#a85219"/>
<polygon points="943.7,504.5 932.1,508.9 932.1,538.7 943.7,534.4" fill="#b95d21"/>
<polygon points="932.1,508.9 915.5,508.9 915.5,538.7 932.1,538.7" fill="#c96a28"/>
<polygon points="915.5,508.9 903.9,504.5 903.9,534.4 915.5,538.7" fill="#d87a30"/>
<polygon points="903.9,504.5 903.9,498.5 903.9,528.3 903.9,534.4" fill="#cf732d"/>
<path d="M913.8,519.1 h7.0" stroke="#eaa050" stroke-width="0.9" opacity="0.55"/>
<path d="M913.8,527.2 h7.0" stroke="#eaa050" stroke-width="0.9" opacity="0.55"/>
<path d="M913.8,532.6 h7.0" stroke="#eaa050" stroke-width="0.9" opacity="0.55"/>
<polyline points="943.7,528.3 943.7,534.4 932.1,538.7 915.5,538.7 903.9,534.4 903.9,528.3" stroke="#145814" stroke-width="2.9" fill="none"/>
<polygon points="943.7,504.5 932.1,508.9 915.5,508.9 903.9,504.5 903.9,498.5 915.5,494.1 932.1,494.1 943.7,498.5" fill="#d48a3c"/>
<polygon points="940.1,504.3 930.6,507.8 917.0,507.8 907.5,504.3 907.5,499.3 917.0,495.8 930.6,495.8 940.1,499.3" fill="url(#rs)"/>
<circle cx="932.1" cy="507.9" r="1.8" fill="#e8c060" opacity="0.8"/>
<circle cx="915.5" cy="507.9" r="1.8" fill="#e8c060" opacity="0.8"/>
<path d="M943.7,504.5 l-4.0,-0.6" stroke="#e8c060" stroke-width="2.4"/>
<path d="M903.9,504.5 l4.0,-0.6" stroke="#e8c060" stroke-width="2.4"/>
<ellipse cx="1055.3" cy="578.9" rx="16.3" ry="7.4" fill="url(#bg)"/>
<path d="M1035.8,533.6 C1035.8,554.0 1043.1,556.7 1039.0,578.9 L1071.6,578.9 C1054.2,556.7 1048.2,554.0 1048.2,533.6 Z" fill="url(#gg)"/>
<path d="M1035.8,533.6 C1035.8,554.0 1043.1,556.7 1039.0,578.9 L1071.6,578.9 C1054.2,556.7 1048.2,554.0 1048.2,533.6 Z" fill="url(#gs)" opacity="0.35"/>
<ellipse cx="1010.9" cy="583.4" rx="16.3" ry="7.4" fill="url(#bg)"/>
<path d="M1018.0,533.6 C1018.0,556.0 1012.3,561.2 994.6,583.4 L1027.2,583.4 C1021.9,561.2 1028.7,556.0 1028.7,533.6 Z" fill="url(#gg)"/>
<path d="M1018.0,533.6 C1018.0,556.0 1012.3,561.2 994.6,583.4 L1027.2,583.4 C1021.9,561.2 1028.7,556.0 1028.7,533.6 Z" fill="url(#gs)" opacity="0.35"/>
<polygon points="1051.8,555.6 1051.8,560.8 1051.8,587.4 1051.8,582.2" fill="#a85219"/>
<polygon points="1051.8,560.8 1041.8,564.5 1041.8,591.1 1051.8,587.4" fill="#b95d21"/>
<polygon points="1041.8,564.5 1027.7,564.5 1027.7,591.1 1041.8,591.1" fill="#c96a28"/>
<polygon points="1027.7,564.5 1017.7,560.8 1017.7,587.4 1027.7,591.1" fill="#d87a30"/>
<polygon points="1017.7,560.8 1017.7,555.6 1017.7,582.2 1017.7,587.4" fill="#cf732d"/>
<path d="M1026.2,573.7 h6.0" stroke="#eaa050" stroke-width="0.9" opacity="0.55"/>
<path d="M1026.2,580.9 h6.0" stroke="#eaa050" stroke-width="0.9" opacity="0.55"/>
<path d="M1026.2,585.6 h6.0" stroke="#eaa050" stroke-width="0.9" opacity="0.55"/>
<polygon points="1051.8,560.8 1041.8,564.5 1027.7,564.5 1017.7,560.8 1017.7,555.6 1027.7,551.9 1041.8,551.9 1051.8,555.6" fill="#d48a3c"/>
<polygon points="1048.7,560.6 1040.5,563.7 1028.9,563.7 1020.8,560.6 1020.8,556.4 1028.9,553.3 1040.5,553.3 1048.7,556.4" fill="url(#rs)"/>
<circle cx="1041.8" cy="563.7" r="1.5" fill="#e8c060" opacity="0.8"/>
<circle cx="1027.7" cy="563.7" r="1.5" fill="#e8c060" opacity="0.8"/>
<path d="M1051.8,560.8 l-3.4,-0.5" stroke="#e8c060" stroke-width="2.0"/>
<path d="M1017.7,560.8 l3.4,-0.5" stroke="#e8c060" stroke-width="2.0"/>
<polygon points="1030.4,529.3 1037.6,529.3 1039.3,561.8 1028.7,561.8" fill="#c86a28"/>
<polygon points="1034.4,529.3 1037.6,529.3 1039.3,561.8 1034.9,561.8" fill="#a9541c"/>
<ellipse cx="1018.9" cy="591.2" rx="18.5" ry="7.8" fill="url(#bg)"/>
<path d="M1020.7,533.6 C1020.7,559.5 1017.8,567.9 1000.4,591.2 L1037.4,591.2 C1026.6,567.9 1030.4,559.5 1030.4,533.6 Z" fill="url(#gg)"/>
<path d="M1020.7,533.6 C1020.7,559.5 1017.8,567.9 1000.4,591.2 L1037.4,591.2 C1026.6,567.9 1030.4,559.5 1030.4,533.6 Z" fill="url(#gs)" opacity="0.35"/>
<polygon points="1051.8,500.0 1051.8,505.4 1051.8,532.1 1051.8,526.6" fill="#a85219"/>
<polygon points="1051.8,505.4 1041.4,509.3 1041.4,535.9 1051.8,532.1" fill="#b95d21"/>
<polygon points="1041.4,509.3 1026.6,509.3 1026.6,535.9 1041.4,535.9" fill="#c96a28"/>
<polygon points="1026.6,509.3 1016.2,505.4 1016.2,532.1 1026.6,535.9" fill="#d87a30"/>
<polygon points="1016.2,505.4 1016.2,500.0 1016.2,526.6 1016.2,532.1" fill="#cf732d"/>
<path d="M1025.1,518.4 h6.2" stroke="#eaa050" stroke-width="0.9" opacity="0.55"/>
<path d="M1025.1,525.6 h6.2" stroke="#eaa050" stroke-width="0.9" opacity="0.55"/>
<path d="M1025.1,530.4 h6.2" stroke="#eaa050" stroke-width="0.9" opacity="0.55"/>
<polyline points="1051.8,526.6 1051.8,532.1 1041.4,535.9 1026.6,535.9 1016.2,532.1 1016.2,526.6" stroke="#145814" stroke-width="2.6" fill="none"/>
<polygon points="1051.8,505.4 1041.4,509.3 1026.6,509.3 1016.2,505.4 1016.2,500.0 1026.6,496.1 1041.4,496.1 1051.8,500.0" fill="#d48a3c"/>
<polygon points="1048.6,505.2 1040.0,508.4 1028.0,508.4 1019.4,505.2 1019.4,500.8 1028.0,497.6 1040.0,497.6 1048.6,500.8" fill="url(#rs)"/>
<circle cx="1041.4" cy="508.4" r="1.6" fill="#e8c060" opacity="0.8"/>
<circle cx="1026.6" cy="508.4" r="1.6" fill="#e8c060" opacity="0.8"/>
<path d="M1051.8,505.4 l-3.6,-0.5" stroke="#e8c060" stroke-width="2.1"/>
<path d="M1016.2,505.4 l3.6,-0.5" stroke="#e8c060" stroke-width="2.1"/>
<ellipse cx="1021.9" cy="588.9" rx="16.7" ry="7.6" fill="url(#bg)"/>
<path d="M1001.8,542.3 C1001.8,563.3 1009.3,566.1 1005.2,588.9 L1038.6,588.9 C1020.8,566.1 1014.6,563.3 1014.6,542.3 Z" fill="url(#gg)"/>
<path d="M1001.8,542.3 C1001.8,563.3 1009.3,566.1 1005.2,588.9 L1038.6,588.9 C1020.8,566.1 1014.6,563.3 1014.6,542.3 Z" fill="url(#gs)" opacity="0.35"/>
<ellipse cx="976.3" cy="593.4" rx="16.7" ry="7.6" fill="url(#bg)"/>
<path d="M983.6,542.3 C983.6,565.3 977.7,570.6 959.6,593.4 L993.0,593.4 C987.6,570.6 994.5,565.3 994.5,542.3 Z" fill="url(#gg)"/>
<path d="M983.6,542.3 C983.6,565.3 977.7,570.6 959.6,593.4 L993.0,593.4 C987.6,570.6 994.5,565.3 994.5,542.3 Z" fill="url(#gs)" opacity="0.35"/>
<polygon points="1018.3,564.9 1018.3,570.3 1018.3,597.6 1018.3,592.3" fill="#a85219"/>
<polygon points="1018.3,570.3 1008.0,574.1 1008.0,601.4 1018.3,597.6" fill="#b95d21"/>
<polygon points="1008.0,574.1 993.5,574.1 993.5,601.4 1008.0,601.4" fill="#c96a28"/>
<polygon points="993.5,574.1 983.2,570.3 983.2,597.6 993.5,601.4" fill="#d87a30"/>
<polygon points="983.2,570.3 983.2,564.9 983.2,592.3 983.2,597.6" fill="#cf732d"/>
<path d="M992.0,583.5 h6.1" stroke="#eaa050" stroke-width="0.9" opacity="0.55"/>
<path d="M992.0,590.9 h6.1" stroke="#eaa050" stroke-width="0.9" opacity="0.55"/>
<path d="M992.0,595.8 h6.1" stroke="#eaa050" stroke-width="0.9" opacity="0.55"/>
<polygon points="1018.3,570.3 1008.0,574.1 993.5,574.1 983.2,570.3 983.2,564.9 993.5,561.1 1008.0,561.1 1018.3,564.9" fill="#d48a3c"/>
<polygon points="1015.1,570.1 1006.7,573.2 994.8,573.2 986.4,570.1 986.4,565.7 994.8,562.6 1006.7,562.6 1015.1,565.7" fill="url(#rs)"/>
<circle cx="1008.0" cy="573.2" r="1.6" fill="#e8c060" opacity="0.8"/>
<circle cx="993.5" cy="573.2" r="1.6" fill="#e8c060" opacity="0.8"/>
<path d="M1018.3,570.3 l-3.5,-0.5" stroke="#e8c060" stroke-width="2.1"/>
<path d="M983.2,570.3 l3.5,-0.5" stroke="#e8c060" stroke-width="2.1"/>
<polygon points="996.4,538.0 1003.6,538.0 1005.5,571.2 994.5,571.2" fill="#c86a28"/>
<polygon points="1000.4,538.0 1003.6,538.0 1005.5,571.2 1000.9,571.2" fill="#a9541c"/>
<ellipse cx="984.5" cy="601.5" rx="19.0" ry="8.0" fill="url(#bg)"/>
<path d="M986.3,542.3 C986.3,569.0 983.4,577.6 965.5,601.5 L1003.5,601.5 C992.4,577.6 996.4,569.0 996.4,542.3 Z" fill="url(#gg)"/>
<path d="M986.3,542.3 C986.3,569.0 983.4,577.6 965.5,601.5 L1003.5,601.5 C992.4,577.6 996.4,569.0 996.4,542.3 Z" fill="url(#gs)" opacity="0.35"/>
<polygon points="1018.2,507.8 1018.2,513.4 1018.2,540.8 1018.2,535.2" fill="#a85219"/>
<polygon points="1018.2,513.4 1007.6,517.3 1007.6,544.7 1018.2,540.8" fill="#b95d21"/>
<polygon points="1007.6,517.3 992.4,517.3 992.4,544.7 1007.6,544.7" fill="#c96a28"/>
<polygon points="992.4,517.3 981.8,513.4 981.8,540.8 992.4,544.7" fill="#d87a30"/>
<polygon points="981.8,513.4 981.8,507.8 981.8,535.2 981.8,540.8" fill="#cf732d"/>
<path d="M990.9,526.7 h6.4" stroke="#eaa050" stroke-width="0.9" opacity="0.55"/>
<path d="M990.9,534.1 h6.4" stroke="#eaa050" stroke-width="0.9" opacity="0.55"/>
<path d="M990.9,539.1 h6.4" stroke="#eaa050" stroke-width="0.9" opacity="0.55"/>
<polyline points="1018.2,535.2 1018.2,540.8 1007.6,544.7 992.4,544.7 981.8,540.8 981.8,535.2" stroke="#145814" stroke-width="2.7" fill="none"/>
<polygon points="1018.2,513.4 1007.6,517.3 992.4,517.3 981.8,513.4 981.8,507.8 992.4,503.9 1007.6,503.9 1018.2,507.8" fill="#d48a3c"/>
<polygon points="1015.0,513.2 1006.2,516.4 993.8,516.4 985.0,513.2 985.0,508.6 993.8,505.4 1006.2,505.4 1015.0,508.6" fill="url(#rs)"/>
<circle cx="1007.6" cy="516.5" r="1.6" fill="#e8c060" opacity="0.8"/>
<circle cx="992.4" cy="516.5" r="1.6" fill="#e8c060" opacity="0.8"/>
<path d="M1018.2,513.4 l-3.6,-0.6" stroke="#e8c060" stroke-width="2.2"/>
<path d="M981.8,513.4 l3.6,-0.6" stroke="#e8c060" stroke-width="2.2"/>
<ellipse cx="908.3" cy="604.6" rx="19.4" ry="8.8" fill="url(#bg)"/>
<path d="M885.1,550.7 C885.1,575.0 893.8,578.2 889.0,604.6 L927.7,604.6 C907.1,578.2 899.9,575.0 899.9,550.7 Z" fill="url(#gg)"/>
<path d="M885.1,550.7 C885.1,575.0 893.8,578.2 889.0,604.6 L927.7,604.6 C907.1,578.2 899.9,575.0 899.9,550.7 Z" fill="url(#gs)" opacity="0.35"/>
<ellipse cx="855.5" cy="609.9" rx="19.4" ry="8.8" fill="url(#bg)"/>
<path d="M864.0,550.7 C864.0,577.4 857.2,583.5 836.2,609.9 L874.9,609.9 C868.6,583.5 876.7,577.4 876.7,550.7 Z" fill="url(#gg)"/>
<path d="M864.0,550.7 C864.0,577.4 857.2,583.5 836.2,609.9 L874.9,609.9 C868.6,583.5 876.7,577.4 876.7,550.7 Z" fill="url(#gs)" opacity="0.35"/>
<polygon points="904.2,576.9 904.2,583.1 904.2,614.8 904.2,608.6" fill="#a85219"/>
<polygon points="904.2,583.1 892.3,587.5 892.3,619.2 904.2,614.8" fill="#b95d21"/>
<polygon points="892.3,587.5 875.5,587.5 875.5,619.2 892.3,619.2" fill="#c96a28"/>
<polygon points="875.5,587.5 863.6,583.1 863.6,614.8 875.5,619.2" fill="#d87a30"/>
<polygon points="863.6,583.1 863.6,576.9 863.6,608.6 863.6,614.8" fill="#cf732d"/>
<path d="M873.7,598.4 h7.1" stroke="#eaa050" stroke-width="0.9" opacity="0.55"/>
<path d="M873.7,606.9 h7.1" stroke="#eaa050" stroke-width="0.9" opacity="0.55"/>
<path d="M873.7,612.6 h7.1" stroke="#eaa050" stroke-width="0.9" opacity="0.55"/>
<polygon points="904.2,583.1 892.3,587.5 875.5,587.5 863.6,583.1 863.6,576.9 875.5,572.5 892.3,572.5 904.2,576.9" fill="#d48a3c"/>
<polygon points="900.5,582.8 890.8,586.4 877.0,586.4 867.3,582.8 867.3,577.8 877.0,574.2 890.8,574.2 900.5,577.8" fill="url(#rs)"/>
<circle cx="892.3" cy="586.5" r="1.8" fill="#e8c060" opacity="0.8"/>
<circle cx="875.5" cy="586.5" r="1.8" fill="#e8c060" opacity="0.8"/>
<path d="M904.2,583.1 l-4.1,-0.6" stroke="#e8c060" stroke-width="2.4"/>
<path d="M863.6,583.1 l4.1,-0.6" stroke="#e8c060" stroke-width="2.4"/>
<polygon points="878.8,545.7 887.2,545.7 889.3,584.2 876.7,584.2" fill="#c86a28"/>
<polygon points="883.4,545.7 887.2,545.7 889.3,584.2 884.1,584.2" fill="#a9541c"/>
<ellipse cx="865.0" cy="619.3" rx="22.0" ry="9.2" fill="url(#bg)"/>
<path d="M867.2,550.7 C867.2,581.6 863.8,591.6 843.0,619.3 L887.0,619.3 C874.2,591.6 878.8,581.6 878.8,550.7 Z" fill="url(#gg)"/>
<path d="M867.2,550.7 C867.2,581.6 863.8,591.6 843.0,619.3 L887.0,619.3 C874.2,591.6 878.8,581.6 878.8,550.7 Z" fill="url(#gs)" opacity="0.35"/>
<polygon points="904.1,510.8 904.1,517.2 904.1,548.9 904.1,542.4" fill="#a85219"/>
<polygon points="904.1,517.2 891.7,521.8 891.7,553.5 904.1,548.9" fill="#b95d21"/>
<polygon points="891.7,521.8 874.3,521.8 874.3,553.5 891.7,553.5" fill="#c96a28"/>
<polygon points="874.3,521.8 861.9,517.2 861.9,548.9 874.3,553.5" fill="#d87a30"/>
<polygon points="861.9,517.2 861.9,510.8 861.9,542.4 861.9,548.9" fill="#cf732d"/>
<path d="M872.4,532.7 h7.4" stroke="#eaa050" stroke-width="0.9" opacity="0.55"/>
<path d="M872.4,541.2 h7.4" stroke="#eaa050" stroke-width="0.9" opacity="0.55"/>
<path d="M872.4,546.9 h7.4" stroke="#eaa050" stroke-width="0.9" opacity="0.55"/>
<polyline points="904.1,542.4 904.1,548.9 891.7,553.5 874.3,553.5 861.9,548.9 861.9,542.4" stroke="#145814" stroke-width="3.1" fill="none"/>
<polygon points="904.1,517.2 891.7,521.8 874.3,521.8 861.9,517.2 861.9,510.8 874.3,506.2 891.7,506.2 904.1,510.8" fill="#d48a3c"/>
<polygon points="900.3,517.0 890.2,520.7 875.8,520.7 865.7,517.0 865.7,511.6 875.8,507.9 890.2,507.9 900.3,511.6" fill="url(#rs)"/>
<circle cx="891.7" cy="520.8" r="1.9" fill="#e8c060" opacity="0.8"/>
<circle cx="874.3" cy="520.8" r="1.9" fill="#e8c060" opacity="0.8"/>
<path d="M904.1,517.2 l-4.2,-0.6" stroke="#e8c060" stroke-width="2.5"/>
<path d="M861.9,517.2 l4.2,-0.6" stroke="#e8c060" stroke-width="2.5"/>
<ellipse cx="989.1" cy="601.5" rx="18.0" ry="8.2" fill="url(#bg)"/>
<path d="M967.5,551.2 C967.5,573.8 975.5,576.9 971.1,601.5 L1007.2,601.5 C987.9,576.9 981.2,573.8 981.2,551.2 Z" fill="url(#gg)"/>
<path d="M967.5,551.2 C967.5,573.8 975.5,576.9 971.1,601.5 L1007.2,601.5 C987.9,576.9 981.2,573.8 981.2,551.2 Z" fill="url(#gs)" opacity="0.35"/>
<ellipse cx="939.9" cy="606.4" rx="18.0" ry="8.2" fill="url(#bg)"/>
<path d="M947.8,551.2 C947.8,576.1 941.5,581.8 921.9,606.4 L958.0,606.4 C952.1,581.8 959.6,576.1 959.6,551.2 Z" fill="url(#gg)"/>
<path d="M947.8,551.2 C947.8,576.1 941.5,581.8 921.9,606.4 L958.0,606.4 C952.1,581.8 959.6,576.1 959.6,551.2 Z" fill="url(#gs)" opacity="0.35"/>
<polygon points="985.2,575.6 985.2,581.4 985.2,610.9 985.2,605.1" fill="#a85219"/>
<polygon points="985.2,581.4 974.1,585.5 974.1,615.0 985.2,610.9" fill="#b95d21"/>
<polygon points="974.1,585.5 958.5,585.5 958.5,615.0 974.1,615.0" fill="#c96a28"/>
<polygon points="958.5,585.5 947.4,581.4 947.4,610.9 958.5,615.0" fill="#d87a30"/>
<polygon points="947.4,581.4 947.4,575.6 947.4,605.1 947.4,610.9" fill="#cf732d"/>
<path d="M956.9,595.6 h6.6" stroke="#eaa050" stroke-width="0.9" opacity="0.55"/>
<path d="M956.9,603.6 h6.6" stroke="#eaa050" stroke-width="0.9" opacity="0.55"/>
<path d="M956.9,608.9 h6.6" stroke="#eaa050" stroke-width="0.9" opacity="0.55"/>
<polygon points="985.2,581.4 974.1,585.5 958.5,585.5 947.4,581.4 947.4,575.6 958.5,571.5 974.1,571.5 985.2,575.6" fill="#d48a3c"/>
<polygon points="981.8,581.2 972.7,584.5 959.9,584.5 950.8,581.2 950.8,576.4 959.9,573.1 972.7,573.1 981.8,576.4" fill="url(#rs)"/>
<circle cx="974.1" cy="584.6" r="1.7" fill="#e8c060" opacity="0.8"/>
<circle cx="958.5" cy="584.6" r="1.7" fill="#e8c060" opacity="0.8"/>
<path d="M985.2,581.4 l-3.8,-0.6" stroke="#e8c060" stroke-width="2.3"/>
<path d="M947.4,581.4 l3.8,-0.6" stroke="#e8c060" stroke-width="2.3"/>
<polygon points="961.6,546.5 969.4,546.5 971.4,582.4 959.6,582.4" fill="#c86a28"/>
<polygon points="965.9,546.5 969.4,546.5 971.4,582.4 966.5,582.4" fill="#a9541c"/>
<ellipse cx="948.8" cy="615.1" rx="20.5" ry="8.6" fill="url(#bg)"/>
<path d="M950.7,551.2 C950.7,580.0 947.6,589.3 928.3,615.1 L969.3,615.1 C957.3,589.3 961.6,580.0 961.6,551.2 Z" fill="url(#gg)"/>
<path d="M950.7,551.2 C950.7,580.0 947.6,589.3 928.3,615.1 L969.3,615.1 C957.3,589.3 961.6,580.0 961.6,551.2 Z" fill="url(#gs)" opacity="0.35"/>
<polygon points="985.2,514.0 985.2,520.0 985.2,549.5 985.2,543.5" fill="#a85219"/>
<polygon points="985.2,520.0 973.7,524.3 973.7,553.8 985.2,549.5" fill="#b95d21"/>
<polygon points="973.7,524.3 957.3,524.3 957.3,553.8 973.7,553.8" fill="#c96a28"/>
<polygon points="957.3,524.3 945.8,520.0 945.8,549.5 957.3,553.8" fill="#d87a30"/>
<polygon points="945.8,520.0 945.8,514.0 945.8,543.5 945.8,549.5" fill="#cf732d"/>
<path d="M955.7,534.4 h6.9" stroke="#eaa050" stroke-width="0.9" opacity="0.55"/>
<path d="M955.7,542.4 h6.9" stroke="#eaa050" stroke-width="0.9" opacity="0.55"/>
<path d="M955.7,547.7 h6.9" stroke="#eaa050" stroke-width="0.9" opacity="0.55"/>
<polyline points="985.2,543.5 985.2,549.5 973.7,553.8 957.3,553.8 945.8,549.5 945.8,543.5" stroke="#145814" stroke-width="2.9" fill="none"/>
<polygon points="985.2,520.0 973.7,524.3 957.3,524.3 945.8,520.0 945.8,514.0 957.3,509.7 973.7,509.7 985.2,514.0" fill="#d48a3c"/>
<polygon points="981.6,519.8 972.2,523.3 958.8,523.3 949.4,519.8 949.4,514.8 958.8,511.3 972.2,511.3 981.6,514.8" fill="url(#rs)"/>
<circle cx="973.7" cy="523.3" r="1.8" fill="#e8c060" opacity="0.8"/>
<circle cx="957.3" cy="523.3" r="1.8" fill="#e8c060" opacity="0.8"/>
<path d="M985.2,520.0 l-3.9,-0.6" stroke="#e8c060" stroke-width="2.4"/>
<path d="M945.8,520.0 l3.9,-0.6" stroke="#e8c060" stroke-width="2.4"/>
<ellipse cx="867.2" cy="620.8" rx="20.5" ry="9.3" fill="url(#bg)"/>
<path d="M842.6,563.8 C842.6,589.5 851.8,592.9 846.7,620.8 L887.6,620.8 C865.8,592.9 858.3,589.5 858.3,563.8 Z" fill="url(#gg)"/>
<path d="M842.6,563.8 C842.6,589.5 851.8,592.9 846.7,620.8 L887.6,620.8 C865.8,592.9 858.3,589.5 858.3,563.8 Z" fill="url(#gs)" opacity="0.35"/>
<ellipse cx="811.4" cy="626.4" rx="20.5" ry="9.3" fill="url(#bg)"/>
<path d="M820.3,563.8 C820.3,592.0 813.2,598.5 790.9,626.4 L831.8,626.4 C825.2,598.5 833.7,592.0 833.7,563.8 Z" fill="url(#gg)"/>
<path d="M820.3,563.8 C820.3,592.0 813.2,598.5 790.9,626.4 L831.8,626.4 C825.2,598.5 833.7,592.0 833.7,563.8 Z" fill="url(#gs)" opacity="0.35"/>
<polygon points="862.8,591.5 862.8,598.0 862.8,631.5 862.8,625.0" fill="#a85219"/>
<polygon points="862.8,598.0 850.2,602.7 850.2,636.1 862.8,631.5" fill="#b95d21"/>
<polygon points="850.2,602.7 832.5,602.7 832.5,636.1 850.2,636.1" fill="#c96a28"/>
<polygon points="832.5,602.7 819.9,598.0 819.9,631.5 832.5,636.1" fill="#d87a30"/>
<polygon points="819.9,598.0 819.9,591.5 819.9,625.0 819.9,631.5" fill="#cf732d"/>
<path d="M830.6,614.2 h7.5" stroke="#eaa050" stroke-width="0.9" opacity="0.55"/>
<path d="M830.6,623.2 h7.5" stroke="#eaa050" stroke-width="0.9" opacity="0.55"/>
<path d="M830.6,629.2 h7.5" stroke="#eaa050" stroke-width="0.9" opacity="0.55"/>
<polygon points="862.8,598.0 850.2,602.7 832.5,602.7 819.9,598.0 819.9,591.5 832.5,586.8 850.2,586.8 862.8,591.5" fill="#d48a3c"/>
<polygon points="858.9,597.7 848.6,601.5 834.1,601.5 823.8,597.7 823.8,592.4 834.1,588.6 848.6,588.6 858.9,592.4" fill="url(#rs)"/>
<circle cx="850.2" cy="601.6" r="1.9" fill="#e8c060" opacity="0.8"/>
<circle cx="832.5" cy="601.6" r="1.9" fill="#e8c060" opacity="0.8"/>
<path d="M862.8,598.0 l-4.3,-0.7" stroke="#e8c060" stroke-width="2.6"/>
<path d="M819.9,598.0 l4.3,-0.7" stroke="#e8c060" stroke-width="2.6"/>
<polygon points="835.9,558.5 844.9,558.5 847.1,599.2 833.7,599.2" fill="#c86a28"/>
<polygon points="840.8,558.5 844.9,558.5 847.1,599.2 841.5,599.2" fill="#a9541c"/>
<ellipse cx="821.4" cy="636.3" rx="23.2" ry="9.8" fill="url(#bg)"/>
<path d="M823.7,563.8 C823.7,596.4 820.1,607.0 798.2,636.3 L844.7,636.3 C831.1,607.0 835.9,596.4 835.9,563.8 Z" fill="url(#gg)"/>
<path d="M823.7,563.8 C823.7,596.4 820.1,607.0 798.2,636.3 L844.7,636.3 C831.1,607.0 835.9,596.4 835.9,563.8 Z" fill="url(#gs)" opacity="0.35"/>
<polygon points="862.7,521.6 862.7,528.4 862.7,561.9 862.7,555.1" fill="#a85219"/>
<polygon points="862.7,528.4 849.6,533.2 849.6,566.7 862.7,561.9" fill="#b95d21"/>
<polygon points="849.6,533.2 831.2,533.2 831.2,566.7 849.6,566.7" fill="#c96a28"/>
<polygon points="831.2,533.2 818.1,528.4 818.1,561.9 831.2,566.7" fill="#d87a30"/>
<polygon points="818.1,528.4 818.1,521.6 818.1,555.1 818.1,561.9" fill="#cf732d"/>
<path d="M829.2,544.8 h7.8" stroke="#eaa050" stroke-width="0.9" opacity="0.55"/>
<path d="M829.2,553.8 h7.8" stroke="#eaa050" stroke-width="0.9" opacity="0.55"/>
<path d="M829.2,559.8 h7.8" stroke="#eaa050" stroke-width="0.9" opacity="0.55"/>
<polyline points="862.7,555.1 862.7,561.9 849.6,566.7 831.2,566.7 818.1,561.9 818.1,555.1" stroke="#145814" stroke-width="3.3" fill="none"/>
<polygon points="862.7,528.4 849.6,533.2 831.2,533.2 818.1,528.4 818.1,521.6 831.2,516.8 849.6,516.8 862.7,521.6" fill="#d48a3c"/>
<polygon points="858.7,528.1 848.0,532.1 832.8,532.1 822.1,528.1 822.1,522.5 832.8,518.5 848.0,518.5 858.7,522.5" fill="url(#rs)"/>
<circle cx="849.6" cy="532.2" r="2.0" fill="#e8c060" opacity="0.8"/>
<circle cx="831.2" cy="532.2" r="2.0" fill="#e8c060" opacity="0.8"/>
<path d="M862.7,528.4 l-4.5,-0.7" stroke="#e8c060" stroke-width="2.7"/>
<path d="M818.1,528.4 l4.5,-0.7" stroke="#e8c060" stroke-width="2.7"/>
<ellipse cx="947.7" cy="619.3" rx="19.1" ry="8.7" fill="url(#bg)"/>
<path d="M924.7,566.0 C924.7,590.0 933.2,593.2 928.5,619.3 L966.8,619.3 C946.4,593.2 939.3,590.0 939.3,566.0 Z" fill="url(#gg)"/>
<path d="M924.7,566.0 C924.7,590.0 933.2,593.2 928.5,619.3 L966.8,619.3 C946.4,593.2 939.3,590.0 939.3,566.0 Z" fill="url(#gs)" opacity="0.35"/>
<ellipse cx="895.5" cy="624.5" rx="19.1" ry="8.7" fill="url(#bg)"/>
<path d="M903.8,566.0 C903.8,592.4 897.1,598.4 876.3,624.5 L914.6,624.5 C908.4,598.4 916.3,592.4 916.3,566.0 Z" fill="url(#gg)"/>
<path d="M903.8,566.0 C903.8,592.4 897.1,598.4 876.3,624.5 L914.6,624.5 C908.4,598.4 916.3,592.4 916.3,566.0 Z" fill="url(#gs)" opacity="0.35"/>
<polygon points="943.5,591.9 943.5,598.0 943.5,629.3 943.5,623.2" fill="#a85219"/>
<polygon points="943.5,598.0 931.8,602.4 931.8,633.7 943.5,629.3" fill="#b95d21"/>
<polygon points="931.8,602.4 915.2,602.4 915.2,633.7 931.8,633.7" fill="#c96a28"/>
<polygon points="915.2,602.4 903.4,598.0 903.4,629.3 915.2,633.7" fill="#d87a30"/>
<polygon points="903.4,598.0 903.4,591.9 903.4,623.2 903.4,629.3" fill="#cf732d"/>
<path d="M913.4,613.1 h7.0" stroke="#eaa050" stroke-width="0.9" opacity="0.55"/>
<path d="M913.4,621.6 h7.0" stroke="#eaa050" stroke-width="0.9" opacity="0.55"/>
<path d="M913.4,627.2 h7.0" stroke="#eaa050" stroke-width="0.9" opacity="0.55"/>
<polygon points="943.5,598.0 931.8,602.4 915.2,602.4 903.4,598.0 903.4,591.9 915.2,587.5 931.8,587.5 943.5,591.9" fill="#d48a3c"/>
<polygon points="939.9,597.8 930.3,601.3 916.7,601.3 907.0,597.8 907.0,592.7 916.7,589.2 930.3,589.2 939.9,592.7" fill="url(#rs)"/>
<circle cx="931.8" cy="601.4" r="1.8" fill="#e8c060" opacity="0.8"/>
<circle cx="915.2" cy="601.4" r="1.8" fill="#e8c060" opacity="0.8"/>
<path d="M943.5,598.0 l-4.0,-0.6" stroke="#e8c060" stroke-width="2.4"/>
<path d="M903.4,598.0 l4.0,-0.6" stroke="#e8c060" stroke-width="2.4"/>
<polygon points="918.4,561.0 926.8,561.0 928.9,599.1 916.3,599.1" fill="#c86a28"/>
<polygon points="923.0,561.0 926.8,561.0 928.9,599.1 923.6,599.1" fill="#a9541c"/>
<ellipse cx="904.9" cy="633.8" rx="21.8" ry="9.1" fill="url(#bg)"/>
<path d="M906.9,566.0 C906.9,596.5 903.6,606.4 883.1,633.8 L926.6,633.8 C913.9,606.4 918.4,596.5 918.4,566.0 Z" fill="url(#gg)"/>
<path d="M906.9,566.0 C906.9,596.5 903.6,606.4 883.1,633.8 L926.6,633.8 C913.9,606.4 918.4,596.5 918.4,566.0 Z" fill="url(#gs)" opacity="0.35"/>
<polygon points="943.5,526.5 943.5,532.9 943.5,564.2 943.5,557.8" fill="#a85219"/>
<polygon points="943.5,532.9 931.2,537.4 931.2,568.7 943.5,564.2" fill="#b95d21"/>
<polygon points="931.2,537.4 914.0,537.4 914.0,568.7 931.2,568.7" fill="#c96a28"/>
<polygon points="914.0,537.4 901.7,532.9 901.7,564.2 914.0,568.7" fill="#d87a30"/>
<polygon points="901.7,532.9 901.7,526.5 901.7,557.8 901.7,564.2" fill="#cf732d"/>
<path d="M912.2,548.2 h7.3" stroke="#eaa050" stroke-width="0.9" opacity="0.55"/>
<path d="M912.2,556.6 h7.3" stroke="#eaa050" stroke-width="0.9" opacity="0.55"/>
<path d="M912.2,562.3 h7.3" stroke="#eaa050" stroke-width="0.9" opacity="0.55"/>
<polyline points="943.5,557.8 943.5,564.2 931.2,568.7 914.0,568.7 901.7,564.2 901.7,557.8" stroke="#145814" stroke-width="3.0" fill="none"/>
<polygon points="943.5,532.9 931.2,537.4 914.0,537.4 901.7,532.9 901.7,526.5 914.0,522.0 931.2,522.0 943.5,526.5" fill="#d48a3c"/>
<polygon points="939.7,532.6 929.7,536.3 915.5,536.3 905.5,532.6 905.5,527.4 915.5,523.7 929.7,523.7 939.7,527.4" fill="url(#rs)"/>
<circle cx="931.2" cy="536.4" r="1.9" fill="#e8c060" opacity="0.8"/>
<circle cx="914.0" cy="536.4" r="1.9" fill="#e8c060" opacity="0.8"/>
<path d="M943.5,532.9 l-4.2,-0.6" stroke="#e8c060" stroke-width="2.5"/>
<path d="M901.7,532.9 l4.2,-0.6" stroke="#e8c060" stroke-width="2.5"/>
<ellipse cx="828.8" cy="644.0" rx="22.0" ry="10.0" fill="url(#bg)"/>
<path d="M802.4,582.8 C802.4,610.3 812.2,614.0 806.8,644.0 L850.8,644.0 C827.4,614.0 819.2,610.3 819.2,582.8 Z" fill="url(#gg)"/>
<path d="M802.4,582.8 C802.4,610.3 812.2,614.0 806.8,644.0 L850.8,644.0 C827.4,614.0 819.2,610.3 819.2,582.8 Z" fill="url(#gs)" opacity="0.35"/>
<ellipse cx="768.8" cy="650.0" rx="22.0" ry="10.0" fill="url(#bg)"/>
<path d="M778.4,582.8 C778.4,613.0 770.7,620.0 746.8,650.0 L790.8,650.0 C783.7,620.0 792.8,613.0 792.8,582.8 Z" fill="url(#gg)"/>
<path d="M778.4,582.8 C778.4,613.0 770.7,620.0 746.8,650.0 L790.8,650.0 C783.7,620.0 792.8,613.0 792.8,582.8 Z" fill="url(#gs)" opacity="0.35"/>
<polygon points="824.0,612.5 824.0,619.5 824.0,655.5 824.0,648.5" fill="#a85219"/>
<polygon points="824.0,619.5 810.5,624.5 810.5,660.5 824.0,655.5" fill="#b95d21"/>
<polygon points="810.5,624.5 791.5,624.5 791.5,660.5 810.5,660.5" fill="#c96a28"/>
<polygon points="791.5,624.5 778.0,619.5 778.0,655.5 791.5,660.5" fill="#d87a30"/>
<polygon points="778.0,619.5 778.0,612.5 778.0,648.5 778.0,655.5" fill="#cf732d"/>
<path d="M789.5,636.9 h8.1" stroke="#eaa050" stroke-width="0.9" opacity="0.55"/>
<path d="M789.5,646.6 h8.1" stroke="#eaa050" stroke-width="0.9" opacity="0.55"/>
<path d="M789.5,653.1 h8.1" stroke="#eaa050" stroke-width="0.9" opacity="0.55"/>
<polygon points="824.0,619.5 810.5,624.5 791.5,624.5 778.0,619.5 778.0,612.5 791.5,607.5 810.5,607.5 824.0,612.5" fill="#d48a3c"/>
<polygon points="819.9,619.2 808.8,623.3 793.2,623.3 782.1,619.2 782.1,613.4 793.2,609.3 808.8,609.3 819.9,613.4" fill="url(#rs)"/>
<circle cx="810.5" cy="623.4" r="2.1" fill="#e8c060" opacity="0.8"/>
<circle cx="791.5" cy="623.4" r="2.1" fill="#e8c060" opacity="0.8"/>
<path d="M824.0,619.5 l-4.6,-0.7" stroke="#e8c060" stroke-width="2.8"/>
<path d="M778.0,619.5 l4.6,-0.7" stroke="#e8c060" stroke-width="2.8"/>
<polygon points="795.2,577.0 804.8,577.0 807.2,620.8 792.8,620.8" fill="#c86a28"/>
<polygon points="800.5,577.0 804.8,577.0 807.2,620.8 801.2,620.8" fill="#a9541c"/>
<ellipse cx="779.6" cy="660.6" rx="25.0" ry="10.5" fill="url(#bg)"/>
<path d="M782.0,582.8 C782.0,617.8 778.2,629.1 754.6,660.6 L804.6,660.6 C790.0,629.1 795.2,617.8 795.2,582.8 Z" fill="url(#gg)"/>
<path d="M782.0,582.8 C782.0,617.8 778.2,629.1 754.6,660.6 L804.6,660.6 C790.0,629.1 795.2,617.8 795.2,582.8 Z" fill="url(#gs)" opacity="0.35"/>
<polygon points="824.0,537.3 824.0,544.7 824.0,580.7 824.0,573.3" fill="#a85219"/>
<polygon points="824.0,544.7 809.9,549.9 809.9,585.9 824.0,580.7" fill="#b95d21"/>
<polygon points="809.9,549.9 790.1,549.9 790.1,585.9 809.9,585.9" fill="#c96a28"/>
<polygon points="790.1,549.9 776.0,544.7 776.0,580.7 790.1,585.9" fill="#d87a30"/>
<polygon points="776.0,544.7 776.0,537.3 776.0,573.3 776.0,580.7" fill="#cf732d"/>
<path d="M788.0,562.2 h8.4" stroke="#eaa050" stroke-width="0.9" opacity="0.55"/>
<path d="M788.0,572.0 h8.4" stroke="#eaa050" stroke-width="0.9" opacity="0.55"/>
<path d="M788.0,578.4 h8.4" stroke="#eaa050" stroke-width="0.9" opacity="0.55"/>
<polyline points="824.0,573.3 824.0,580.7 809.9,585.9 790.1,585.9 776.0,580.7 776.0,573.3" stroke="#145814" stroke-width="3.5" fill="none"/>
<polygon points="824.0,544.7 809.9,549.9 790.1,549.9 776.0,544.7 776.0,537.3 790.1,532.1 809.9,532.1 824.0,537.3" fill="#d48a3c"/>
<polygon points="819.7,544.3 808.2,548.6 791.8,548.6 780.3,544.3 780.3,538.3 791.8,534.0 808.2,534.0 819.7,538.3" fill="url(#rs)"/>
<circle cx="809.9" cy="548.7" r="2.2" fill="#e8c060" opacity="0.8"/>
<circle cx="790.1" cy="548.7" r="2.2" fill="#e8c060" opacity="0.8"/>
<path d="M824.0,544.7 l-4.8,-0.7" stroke="#e8c060" stroke-width="2.9"/>
<path d="M776.0,544.7 l4.8,-0.7" stroke="#e8c060" stroke-width="2.9"/>
<ellipse cx="908.8" cy="637.8" rx="20.5" ry="9.3" fill="url(#bg)"/>
<path d="M884.2,580.8 C884.2,606.5 893.4,609.9 888.3,637.8 L929.2,637.8 C907.4,609.9 899.9,606.5 899.9,580.8 Z" fill="url(#gg)"/>
<path d="M884.2,580.8 C884.2,606.5 893.4,609.9 888.3,637.8 L929.2,637.8 C907.4,609.9 899.9,606.5 899.9,580.8 Z" fill="url(#gs)" opacity="0.35"/>
<ellipse cx="853.0" cy="643.4" rx="20.5" ry="9.3" fill="url(#bg)"/>
<path d="M861.9,580.8 C861.9,609.0 854.8,615.5 832.5,643.4 L873.4,643.4 C866.8,615.5 875.3,609.0 875.3,580.8 Z" fill="url(#gg)"/>
<path d="M861.9,580.8 C861.9,609.0 854.8,615.5 832.5,643.4 L873.4,643.4 C866.8,615.5 875.3,609.0 875.3,580.8 Z" fill="url(#gs)" opacity="0.35"/>
<polygon points="904.4,608.5 904.4,615.0 904.4,648.5 904.4,642.0" fill="#a85219"/>
<polygon points="904.4,615.0 891.8,619.7 891.8,653.1 904.4,648.5" fill="#b95d21"/>
<polygon points="891.8,619.7 874.1,619.7 874.1,653.1 891.8,653.1" fill="#c96a28"/>
<polygon points="874.1,619.7 861.5,615.0 861.5,648.5 874.1,653.1" fill="#d87a30"/>
<polygon points="861.5,615.0 861.5,608.5 861.5,642.0 861.5,648.5" fill="#cf732d"/>
<path d="M872.2,631.2 h7.5" stroke="#eaa050" stroke-width="0.9" opacity="0.55"/>
<path d="M872.2,640.2 h7.5" stroke="#eaa050" stroke-width="0.9" opacity="0.55"/>
<path d="M872.2,646.2 h7.5" stroke="#eaa050" stroke-width="0.9" opacity="0.55"/>
<polygon points="904.4,615.0 891.8,619.7 874.1,619.7 861.5,615.0 861.5,608.5 874.1,603.8 891.8,603.8 904.4,608.5" fill="#d48a3c"/>
<polygon points="900.5,614.7 890.2,618.5 875.7,618.5 865.4,614.7 865.4,609.4 875.7,605.6 890.2,605.6 900.5,609.4" fill="url(#rs)"/>
<circle cx="891.8" cy="618.6" r="1.9" fill="#e8c060" opacity="0.8"/>
<circle cx="874.1" cy="618.6" r="1.9" fill="#e8c060" opacity="0.8"/>
<path d="M904.4,615.0 l-4.3,-0.7" stroke="#e8c060" stroke-width="2.6"/>
<path d="M861.5,615.0 l4.3,-0.7" stroke="#e8c060" stroke-width="2.6"/>
<polygon points="877.5,575.5 886.5,575.5 888.7,616.2 875.3,616.2" fill="#c86a28"/>
<polygon points="882.4,575.5 886.5,575.5 888.7,616.2 883.1,616.2" fill="#a9541c"/>
<ellipse cx="863.0" cy="653.3" rx="23.2" ry="9.8" fill="url(#bg)"/>
<path d="M865.3,580.8 C865.3,613.4 861.7,624.0 839.8,653.3 L886.3,653.3 C872.7,624.0 877.5,613.4 877.5,580.8 Z" fill="url(#gg)"/>
<path d="M865.3,580.8 C865.3,613.4 861.7,624.0 839.8,653.3 L886.3,653.3 C872.7,624.0 877.5,613.4 877.5,580.8 Z" fill="url(#gs)" opacity="0.35"/>
<polygon points="904.3,538.6 904.3,545.4 904.3,578.9 904.3,572.1" fill="#a85219"/>
<polygon points="904.3,545.4 891.2,550.2 891.2,583.7 904.3,578.9" fill="#b95d21"/>
<polygon points="891.2,550.2 872.8,550.2 872.8,583.7 891.2,583.7" fill="#c96a28"/>
<polygon points="872.8,550.2 859.7,545.4 859.7,578.9 872.8,583.7" fill="#d87a30"/>
<polygon points="859.7,545.4 859.7,538.6 859.7,572.1 859.7,578.9" fill="#cf732d"/>
<path d="M870.8,561.8 h7.8" stroke="#eaa050" stroke-width="0.9" opacity="0.55"/>
<path d="M870.8,570.8 h7.8" stroke="#eaa050" stroke-width="0.9" opacity="0.55"/>
<path d="M870.8,576.8 h7.8" stroke="#eaa050" stroke-width="0.9" opacity="0.55"/>
<polyline points="904.3,572.1 904.3,578.9 891.2,583.7 872.8,583.7 859.7,578.9 859.7,572.1" stroke="#145814" stroke-width="3.3" fill="none"/>
<polygon points="904.3,545.4 891.2,550.2 872.8,550.2 859.7,545.4 859.7,538.6 872.8,533.8 891.2,533.8 904.3,538.6" fill="#d48a3c"/>
<polygon points="900.3,545.1 889.6,549.1 874.4,549.1 863.7,545.1 863.7,539.5 874.4,535.5 889.6,535.5 900.3,539.5" fill="url(#rs)"/>
<circle cx="891.2" cy="549.2" r="2.0" fill="#e8c060" opacity="0.8"/>
<circle cx="872.8" cy="549.2" r="2.0" fill="#e8c060" opacity="0.8"/>
<path d="M904.3,545.4 l-4.5,-0.7" stroke="#e8c060" stroke-width="2.7"/>
<path d="M859.7,545.4 l4.5,-0.7" stroke="#e8c060" stroke-width="2.7"/>
<ellipse cx="868.2" cy="658.9" rx="21.6" ry="9.8" fill="url(#bg)"/>
<path d="M842.4,598.9 C842.4,625.9 852.0,629.5 846.7,658.9 L889.8,658.9 C866.8,629.5 858.8,625.9 858.8,598.9 Z" fill="url(#gg)"/>
<path d="M842.4,598.9 C842.4,625.9 852.0,629.5 846.7,658.9 L889.8,658.9 C866.8,629.5 858.8,625.9 858.8,598.9 Z" fill="url(#gs)" opacity="0.35"/>
<ellipse cx="809.4" cy="664.8" rx="21.6" ry="9.8" fill="url(#bg)"/>
<path d="M818.8,598.9 C818.8,628.6 811.3,635.4 787.9,664.8 L831.0,664.8 C824.0,635.4 832.9,628.6 832.9,598.9 Z" fill="url(#gg)"/>
<path d="M818.8,598.9 C818.8,628.6 811.3,635.4 787.9,664.8 L831.0,664.8 C824.0,635.4 832.9,628.6 832.9,598.9 Z" fill="url(#gs)" opacity="0.35"/>
<polygon points="863.6,628.0 863.6,635.0 863.6,670.2 863.6,663.3" fill="#a85219"/>
<polygon points="863.6,635.0 850.3,639.8 850.3,675.1 863.6,670.2" fill="#b95d21"/>
<polygon points="850.3,639.8 831.6,639.8 831.6,675.1 850.3,675.1" fill="#c96a28"/>
<polygon points="831.6,639.8 818.4,635.0 818.4,670.2 831.6,675.1" fill="#d87a30"/>
<polygon points="818.4,635.0 818.4,628.0 818.4,663.3 818.4,670.2" fill="#cf732d"/>
<path d="M829.7,652.0 h7.9" stroke="#eaa050" stroke-width="0.9" opacity="0.55"/>
<path d="M829.7,661.5 h7.9" stroke="#eaa050" stroke-width="0.9" opacity="0.55"/>
<path d="M829.7,667.9 h7.9" stroke="#eaa050" stroke-width="0.9" opacity="0.55"/>
<polygon points="863.6,635.0 850.3,639.8 831.6,639.8 818.4,635.0 818.4,628.0 831.6,623.2 850.3,623.2 863.6,628.0" fill="#d48a3c"/>
<polygon points="859.5,634.6 848.6,638.6 833.3,638.6 822.5,634.6 822.5,629.0 833.3,625.0 848.6,625.0 859.5,629.0" fill="url(#rs)"/>
<circle cx="850.3" cy="638.8" r="2.0" fill="#e8c060" opacity="0.8"/>
<circle cx="831.6" cy="638.8" r="2.0" fill="#e8c060" opacity="0.8"/>
<path d="M863.6,635.0 l-4.5,-0.7" stroke="#e8c060" stroke-width="2.7"/>
<path d="M818.4,635.0 l4.5,-0.7" stroke="#e8c060" stroke-width="2.7"/>
<polygon points="835.3,593.3 844.7,593.3 847.1,636.2 832.9,636.2" fill="#c86a28"/>
<polygon points="840.5,593.3 844.7,593.3 847.1,636.2 841.2,636.2" fill="#a9541c"/>
<ellipse cx="820.0" cy="675.2" rx="24.5" ry="10.3" fill="url(#bg)"/>
<path d="M822.4,598.9 C822.4,633.3 818.6,644.4 795.5,675.2 L844.5,675.2 C830.2,644.4 835.3,633.3 835.3,598.9 Z" fill="url(#gg)"/>
<path d="M822.4,598.9 C822.4,633.3 818.6,644.4 795.5,675.2 L844.5,675.2 C830.2,644.4 835.3,633.3 835.3,598.9 Z" fill="url(#gs)" opacity="0.35"/>
<polygon points="863.5,554.4 863.5,561.6 863.5,596.9 863.5,589.7" fill="#a85219"/>
<polygon points="863.5,561.6 849.7,566.7 849.7,602.0 863.5,596.9" fill="#b95d21"/>
<polygon points="849.7,566.7 830.3,566.7 830.3,602.0 849.7,602.0" fill="#c96a28"/>
<polygon points="830.3,566.7 816.5,561.6 816.5,596.9 830.3,602.0" fill="#d87a30"/>
<polygon points="816.5,561.6 816.5,554.4 816.5,589.7 816.5,596.9" fill="#cf732d"/>
<path d="M828.2,578.8 h8.2" stroke="#eaa050" stroke-width="0.9" opacity="0.55"/>
<path d="M828.2,588.3 h8.2" stroke="#eaa050" stroke-width="0.9" opacity="0.55"/>
<path d="M828.2,594.7 h8.2" stroke="#eaa050" stroke-width="0.9" opacity="0.55"/>
<polyline points="863.5,589.7 863.5,596.9 849.7,602.0 830.3,602.0 816.5,596.9 816.5,589.7" stroke="#145814" stroke-width="3.4" fill="none"/>
<polygon points="863.5,561.6 849.7,566.7 830.3,566.7 816.5,561.6 816.5,554.4 830.3,549.3 849.7,549.3 863.5,554.4" fill="#d48a3c"/>
<polygon points="859.3,561.3 848.0,565.4 832.0,565.4 820.7,561.3 820.7,555.3 832.0,551.2 848.0,551.2 859.3,555.3" fill="url(#rs)"/>
<circle cx="849.7" cy="565.6" r="2.1" fill="#e8c060" opacity="0.8"/>
<circle cx="830.3" cy="565.6" r="2.1" fill="#e8c060" opacity="0.8"/>
<path d="M863.5,561.6 l-4.7,-0.7" stroke="#e8c060" stroke-width="2.8"/>
<path d="M816.5,561.6 l4.7,-0.7" stroke="#e8c060" stroke-width="2.8"/>
</svg>
<!--/MODELS-->
<!--MISC-->
<div class="a" style="left:413px;top:64px;width:20px;height:20px;background:#f7f7f7"></div>
<svg class="a" style="left:416px;top:68px" width="14" height="12" viewBox="0 0 14 12"><path d="M4.5 2.5L1.5 6l3 3.5M9.5 2.5l3 3.5-3 3.5" stroke="#444" stroke-width="1.1" fill="none"/><path d="M7 1v10" stroke="#777" stroke-width="1.4"/></svg>
<div class="a" style="left:413px;top:89px;width:128px;height:138px;background:#dcdcdc;border-radius:0 6px 6px 0"></div>
<div class="a" style="left:420px;top:96px;width:111px;height:111px;border:2px solid #2b8fea;border-radius:4px;background:#d4d4d4"></div>
<div class="a" style="left:437px;top:110px;line-height:14px;font-size:13px;color:#eaeaea">1</div>
<svg class="a" style="left:413px;top:89px" width="128" height="118" viewBox="413 89 128 118"><ellipse cx="454.8" cy="145.5" rx="5.5" ry="2.8" fill="#8c8a00"/><rect x="449.3" y="139.5" width="11" height="6" fill="#c4c000"/><ellipse cx="454.8" cy="139.5" rx="5.5" ry="2.8" fill="#e8e400"/><rect x="453.3" y="127.5" width="3" height="12" fill="#8a8800"/><ellipse cx="454.8" cy="129.5" rx="5.5" ry="2.8" fill="#9c9900"/><rect x="449.3" y="123.5" width="11" height="6" fill="#c8c400"/><ellipse cx="454.8" cy="123.5" rx="5.5" ry="2.8" fill="#f4f000"/><ellipse cx="464.3" cy="151.8" rx="5.5" ry="2.8" fill="#8c8a00"/><rect x="458.8" y="145.8" width="11" height="6" fill="#c4c000"/><ellipse cx="464.3" cy="145.8" rx="5.5" ry="2.8" fill="#e8e400"/><rect x="462.8" y="133.8" width="3" height="12" fill="#8a8800"/><ellipse cx="464.3" cy="135.8" rx="5.5" ry="2.8" fill="#9c9900"/><rect x="458.8" y="129.8" width="11" height="6" fill="#c8c400"/><ellipse cx="464.3" cy="129.8" rx="5.5" ry="2.8" fill="#f4f000"/><ellipse cx="444.3" cy="153.4" rx="5.5" ry="2.8" fill="#8c8a00"/><rect x="438.8" y="147.4" width="11" height="6" fill="#c4c000"/><ellipse cx="444.3" cy="147.4" rx="5.5" ry="2.8" fill="#e8e400"/><rect x="442.8" y="135.4" width="3" height="12" fill="#8a8800"/><ellipse cx="444.3" cy="137.4" rx="5.5" ry="2.8" fill="#9c9900"/><rect x="438.8" y="131.4" width="11" height="6" fill="#c8c400"/><ellipse cx="444.3" cy="131.4" rx="5.5" ry="2.8" fill="#f4f000"/><ellipse cx="473.8" cy="156.6" rx="5.5" ry="2.8" fill="#8c8a00"/><rect x="468.3" y="150.6" width="11" height="6" fill="#c4c000"/><ellipse cx="473.8" cy="150.6" rx="5.5" ry="2.8" fill="#e8e400"/><rect x="472.3" y="138.6" width="3" height="12" fill="#8a8800"/><ellipse cx="473.8" cy="140.6" rx="5.5" ry="2.8" fill="#9c9900"/><rect x="468.3" y="134.6" width="11" height="6" fill="#c8c400"/><ellipse cx="473.8" cy="134.6" rx="5.5" ry="2.8" fill="#f4f000"/><ellipse cx="453.2" cy="159.7" rx="5.5" ry="2.8" fill="#8c8a00"/><rect x="447.7" y="153.7" width="11" height="6" fill="#c4c000"/><ellipse cx="453.2" cy="153.7" rx="5.5" ry="2.8" fill="#e8e400"/><rect x="451.7" y="141.7" width="3" height="12" fill="#8a8800"/><ellipse cx="453.2" cy="143.7" rx="5.5" ry="2.8" fill="#9c9900"/><rect x="447.7" y="137.7" width="11" height="6" fill="#c8c400"/><ellipse cx="453.2" cy="137.7" rx="5.5" ry="2.8" fill="#f4f000"/><ellipse cx="483.9" cy="162.9" rx="5.5" ry="2.8" fill="#8c8a00"/><rect x="478.4" y="156.9" width="11" height="6" fill="#c4c000"/><ellipse cx="483.9" cy="156.9" rx="5.5" ry="2.8" fill="#e8e400"/><rect x="482.4" y="144.9" width="3" height="12" fill="#8a8800"/><ellipse cx="483.9" cy="146.9" rx="5.5" ry="2.8" fill="#9c9900"/><rect x="478.4" y="140.9" width="11" height="6" fill="#c8c400"/><ellipse cx="483.9" cy="140.9" rx="5.5" ry="2.8" fill="#f4f000"/><ellipse cx="462.7" cy="165.1" rx="5.5" ry="2.8" fill="#8c8a00"/><rect x="457.2" y="159.1" width="11" height="6" fill="#c4c000"/><ellipse cx="462.7" cy="159.1" rx="5.5" ry="2.8" fill="#e8e400"/><rect x="461.2" y="147.1" width="3" height="12" fill="#8a8800"/><ellipse cx="462.7" cy="149.1" rx="5.5" ry="2.8" fill="#9c9900"/><rect x="457.2" y="143.1" width="11" height="6" fill="#c8c400"/><ellipse cx="462.7" cy="143.1" rx="5.5" ry="2.8" fill="#f4f000"/><ellipse cx="494.4" cy="169.9" rx="5.5" ry="2.8" fill="#8c8a00"/><rect x="488.9" y="163.9" width="11" height="6" fill="#c4c000"/><ellipse cx="494.4" cy="163.9" rx="5.5" ry="2.8" fill="#e8e400"/><rect x="492.9" y="151.9" width="3" height="12" fill="#8a8800"/><ellipse cx="494.4" cy="153.9" rx="5.5" ry="2.8" fill="#9c9900"/><rect x="488.9" y="147.9" width="11" height="6" fill="#c8c400"/><ellipse cx="494.4" cy="147.9" rx="5.5" ry="2.8" fill="#f4f000"/><ellipse cx="472.8" cy="171.5" rx="5.5" ry="2.8" fill="#8c8a00"/><rect x="467.3" y="165.5" width="11" height="6" fill="#c4c000"/><ellipse cx="472.8" cy="165.5" rx="5.5" ry="2.8" fill="#e8e400"/><rect x="471.3" y="153.5" width="3" height="12" fill="#8a8800"/><ellipse cx="472.8" cy="155.5" rx="5.5" ry="2.8" fill="#9c9900"/><rect x="467.3" y="149.5" width="11" height="6" fill="#c8c400"/><ellipse cx="472.8" cy="149.5" rx="5.5" ry="2.8" fill="#f4f000"/><ellipse cx="505.1" cy="177.8" rx="5.5" ry="2.8" fill="#8c8a00"/><rect x="499.6" y="171.8" width="11" height="6" fill="#c4c000"/><ellipse cx="505.1" cy="171.8" rx="5.5" ry="2.8" fill="#e8e400"/><rect x="503.6" y="159.8" width="3" height="12" fill="#8a8800"/><ellipse cx="505.1" cy="161.8" rx="5.5" ry="2.8" fill="#9c9900"/><rect x="499.6" y="155.8" width="11" height="6" fill="#c8c400"/><ellipse cx="505.1" cy="155.8" rx="5.5" ry="2.8" fill="#f4f000"/><ellipse cx="483.3" cy="178.1" rx="5.5" ry="2.8" fill="#8c8a00"/><rect x="477.8" y="172.1" width="11" height="6" fill="#c4c000"/><ellipse cx="483.3" cy="172.1" rx="5.5" ry="2.8" fill="#e8e400"/><rect x="481.8" y="160.1" width="3" height="12" fill="#8a8800"/><ellipse cx="483.3" cy="162.1" rx="5.5" ry="2.8" fill="#9c9900"/><rect x="477.8" y="156.1" width="11" height="6" fill="#c8c400"/><ellipse cx="483.3" cy="156.1" rx="5.5" ry="2.8" fill="#f4f000"/><ellipse cx="494" cy="185.1" rx="5.5" ry="2.8" fill="#8c8a00"/><rect x="488.5" y="179.1" width="11" height="6" fill="#c4c000"/><ellipse cx="494" cy="179.1" rx="5.5" ry="2.8" fill="#e8e400"/><rect x="492.5" y="167.1" width="3" height="12" fill="#8a8800"/><ellipse cx="494" cy="169.1" rx="5.5" ry="2.8" fill="#9c9900"/><rect x="488.5" y="163.1" width="11" height="6" fill="#c8c400"/><ellipse cx="494" cy="163.1" rx="5.5" ry="2.8" fill="#f4f000"/></svg>
<div class="a" style="left:1861px;top:184px;width:24px;height:724px;border-radius:12px;background:#fff"></div>
<div class="a" style="left:1867px;top:196px;width:12px;height:700px;background:#00ae42"></div>
<div class="a" style="left:1862px;top:185px;width:22px;height:22px;border-radius:50%;background:#00ae42;border:2px solid #fff"></div>
<svg class="a" style="left:1866px;top:189px" width="14" height="14" viewBox="0 0 14 14"><path d="M7 2v10M2 7h10" stroke="#fff" stroke-width="1.3"/></svg>
<div class="a" style="left:1862px;top:885px;width:22px;height:22px;border-radius:50%;background:#00ae42;border:2px solid #fff"></div>
<div class="a" style="left:1809px;top:162px;width:43px;height:34px;background:#fff;border-radius:3px;color:#00ae42;font-size:12px;line-height:15px;text-align:center;padding-top:2px">199<br>28.00</div>
<svg class="a" style="left:1850px;top:185px" width="12" height="12" viewBox="0 0 12 12"><path d="M0 0h2l10 10L0 10z" fill="#fff"/></svg>
<div class="a" style="left:1813px;top:896px;width:39px;height:34px;background:#fff;border-radius:3px;color:#00ae42;font-size:12px;line-height:15px;text-align:center;padding-top:2px">1<br>0.20</div>
<svg class="a" style="left:1850px;top:889px" width="12" height="10" viewBox="0 0 12 10"><path d="M0 10V7L10 0h2L4 10z" fill="#fff"/></svg>
<svg class="a" style="left:1862px;top:985px" width="21" height="20" viewBox="0 0 21 20"><path d="M10.5 1l9 4.5-9 4.5-9-4.5z" fill="#00ae42"/><path d="M1.5 9.5l9 4.5 9-4.5M1.5 13.5l9 4.5 9-4.5" stroke="#00ae42" stroke-width="2.2" fill="none" stroke-linejoin="round"/></svg>
<div class="a" style="left:716px;top:983px;width:838px;height:24px;border-radius:12px;background:#fff"></div>
<div class="a" style="left:722px;top:989px;width:820px;height:12px;border-radius:6px 0 0 6px;background:#00ae42"></div>
<div class="a" style="left:1531px;top:984px;width:22px;height:22px;border-radius:50%;background:#00ae42;border:2px solid #fff"></div>
<div class="a" style="left:1563px;top:986px;width:31px;height:18px;background:#fff;border-radius:2px;color:#00ae42;font-size:12px;line-height:18px;text-align:center">145</div>
<svg class="a" style="left:1556px;top:990px" width="8" height="10" viewBox="0 0 8 10"><path d="M8 0v10L0 5z" fill="#fff"/></svg>
<div class="a" style="left:550px;top:980px;width:35px;height:35px;border-radius:50%;background:#f8f8f8"></div>
<svg class="a" style="left:556px;top:986px" width="23" height="23" viewBox="0 0 23 23"><path d="M2 7V4a2 2 0 0 1 2-2h3M16 2h3a2 2 0 0 1 2 2v3M21 16v3a2 2 0 0 1-2 2h-3M7 21H4a2 2 0 0 1-2-2v-3" stroke="#555" stroke-width="1.6" fill="none"/><path d="M11.5 6l5 2.7v5.6l-5 2.7-5-2.7V8.7z M6.5 8.7l5 2.7 5-2.7M11.5 11.4V17" stroke="#555" stroke-width="1.4" fill="none" stroke-linejoin="round"/></svg>
<svg class="a" style="left:413px;top:905px" width="115" height="116" viewBox="413 905 115 116">
<path d="M434,935.6 L476.5,917.6 L522,935.6 L488,950 Z" fill="#c9c9c9"/>
<path d="M434,935.6 L488,950 L488,1006.5 L434,994 Z" fill="#c6c6c6"/>
<path d="M488,950 L522,935.6 L522,994 L488,1006.5 Z" fill="#c4c4c4"/>
<path d="M452,928 L505,943 M440,945 L488,958 M456,930 L470,939" stroke="#d8d8d8" stroke-width=".6" stroke-dasharray="2 2"/>
<text x="0" y="0" transform="translate(484,939) rotate(205)" font-size="8.5" fill="#333" font-family="Liberation Sans" font-style="italic">Top</text>
<text x="0" y="0" transform="translate(443,972) rotate(16)" font-size="10" fill="#444" font-family="Liberation Sans">Front</text>
<text x="0" y="0" transform="translate(489,980) rotate(-18)" font-size="10" fill="#444" font-family="Liberation Sans">Right</text>
<path d="M432,994 L432,940" stroke="#7b7bc4" stroke-width="2"/><path d="M426,944 L432,930 L438,944 Z" fill="#7b7bc4"/>
<path d="M432,994 L478,1012" stroke="#c47a7a" stroke-width="2"/><path d="M472,1004 L482,1015 L468,1017 Z" fill="#c47a7a"/>
<path d="M432,994 L472,977" stroke="#a8cca8" stroke-width="1.5"/><path d="M468,972 L482,973 L472,981 Z" fill="#a8cca8"/>
<text x="427" y="922" font-size="10" fill="#7b7bc4" font-family="Liberation Sans">Z</text>
<text x="486" y="1021" font-size="10" fill="#c47a7a" font-family="Liberation Sans">X</text>
</svg>
<!--/MISC-->
<!--PANEL-->
<div class="a" style="left:1324px;top:64px;width:458px;height:31px;background:rgba(26,26,26,0.9)"></div>
<div class="a" style="left:1324px;top:95px;width:458px;height:580px;background:rgba(45,45,45,0.88)"></div>
<div class="a" style="left:1336px;top:71px;line-height:17px;font-size:13px;font-weight:bold;color:#fff">Slicing Result</div>
<svg class="a" style="left:1764px;top:73px" width="15" height="13" viewBox="0 0 15 13"><path d="M2 6.5l5.5-4.5 5.5 4.5M2 10.5l5.5-4.5 5.5 4.5" stroke="#eee" stroke-width="1.1" fill="none"/></svg>
<div class="a" style="left:1336px;top:98px;line-height:17px;font-size:13px;font-weight:bold;color:#fff">Color Scheme</div>
<div class="a" style="left:1428px;top:99px;width:198px;height:21px;border-radius:3px;background:rgba(38,38,38,0.95)"></div>
<svg class="a" style="left:1433px;top:106px" width="12" height="7" viewBox="0 0 12 7"><path d="M1.5 1.5l4.5 4 4.5-4" stroke="#eee" stroke-width="1.2" fill="none"/></svg>
<div class="a" style="left:1453px;top:101px;line-height:17px;font-size:13px;color:#eee">Line Type</div>
<div class="a" style="left:1336px;top:123px;line-height:17px;font-size:13px;font-weight:bold;color:#fff">Line Type</div>
<div class="a" style="left:1465px;top:123px;line-height:17px;font-size:13px;font-weight:bold;color:#fff">Time</div>
<div class="a" style="left:1527px;top:123px;line-height:17px;font-size:13px;font-weight:bold;color:#fff">Percent</div>
<div class="a" style="left:1588px;top:123px;line-height:17px;font-size:13px;font-weight:bold;color:#fff">Used filament</div>
<div class="a" style="left:1706px;top:123px;line-height:17px;font-size:13px;font-weight:bold;color:#fff">Display</div>
<div class="a" style="left:1325px;top:143px;width:457px;height:1px;background:#cfcfcf"></div>
<div class="a" style="left:1337px;top:149.5px;width:9px;height:9px;background:#ffe64d"></div>
<div class="a" style="left:1354px;top:145.5px;line-height:17px;font-size:13px;color:#eee;white-space:nowrap">Inner wall</div>
<div class="a" style="left:1465px;top:145.5px;line-height:17px;font-size:13px;color:#eee;white-space:nowrap">6m30s</div>
<div class="a" style="left:1527px;top:145.5px;line-height:17px;font-size:13px;color:#eee;white-space:nowrap">9.5%</div>
<div class="a" style="left:1588px;top:145.5px;line-height:17px;font-size:13px;color:#eee;white-space:nowrap">0.97 m</div>
<div class="a" style="left:1636px;top:145.5px;line-height:17px;font-size:13px;color:#eee;white-space:nowrap">3.08 g</div>
<div class="a" style="left:1710px;top:146.5px;width:15px;height:15px;background:#555"></div>
<svg class="a" style="left:1710px;top:146.5px" width="15" height="15" viewBox="0 0 15 15"><path d="M2.5 8l3 3 6.5-6.5" stroke="#00ae42" stroke-width="2" fill="none"/></svg>
<div class="a" style="left:1337px;top:170.5px;width:9px;height:9px;background:#ff7d38"></div>
<div class="a" style="left:1354px;top:166.5px;line-height:17px;font-size:13px;color:#eee;white-space:nowrap">Outer wall</div>
<div class="a" style="left:1465px;top:166.5px;line-height:17px;font-size:13px;color:#eee;white-space:nowrap">13m5s</div>
<div class="a" style="left:1527px;top:166.5px;line-height:17px;font-size:13px;color:#eee;white-space:nowrap">19.1%</div>
<div class="a" style="left:1588px;top:166.5px;line-height:17px;font-size:13px;color:#eee;white-space:nowrap">1.04 m</div>
<div class="a" style="left:1636px;top:166.5px;line-height:17px;font-size:13px;color:#eee;white-space:nowrap">3.29 g</div>
<div class="a" style="left:1710px;top:167.5px;width:15px;height:15px;background:#555"></div>
<svg class="a" style="left:1710px;top:167.5px" width="15" height="15" viewBox="0 0 15 15"><path d="M2.5 8l3 3 6.5-6.5" stroke="#00ae42" stroke-width="2" fill="none"/></svg>
<div class="a" style="left:1337px;top:191.5px;width:9px;height:9px;background:#1919ff"></div>
<div class="a" style="left:1354px;top:187.5px;line-height:17px;font-size:13px;color:#eee;white-space:nowrap">Overhang wall</div>
<div class="a" style="left:1465px;top:187.5px;line-height:17px;font-size:13px;color:#eee;white-space:nowrap">1m2s</div>
<div class="a" style="left:1527px;top:187.5px;line-height:17px;font-size:13px;color:#eee;white-space:nowrap">1.5%</div>
<div class="a" style="left:1588px;top:187.5px;line-height:17px;font-size:13px;color:#eee;white-space:nowrap">0.02 m</div>
<div class="a" style="left:1636px;top:187.5px;line-height:17px;font-size:13px;color:#eee;white-space:nowrap">0.06 g</div>
<div class="a" style="left:1710px;top:188.5px;width:15px;height:15px;background:#555"></div>
<svg class="a" style="left:1710px;top:188.5px" width="15" height="15" viewBox="0 0 15 15"><path d="M2.5 8l3 3 6.5-6.5" stroke="#00ae42" stroke-width="2" fill="none"/></svg>
<div class="a" style="left:1337px;top:212.5px;width:9px;height:9px;background:#b03029"></div>
<div class="a" style="left:1354px;top:208.5px;line-height:17px;font-size:13px;color:#eee;white-space:nowrap">Sparse infill</div>
<div class="a" style="left:1465px;top:208.5px;line-height:17px;font-size:13px;color:#eee;white-space:nowrap">5m6s</div>
<div class="a" style="left:1527px;top:208.5px;line-height:17px;font-size:13px;color:#eee;white-space:nowrap">7.4%</div>
<div class="a" style="left:1588px;top:208.5px;line-height:17px;font-size:13px;color:#eee;white-space:nowrap">0.69 m</div>
<div class="a" style="left:1636px;top:208.5px;line-height:17px;font-size:13px;color:#eee;white-space:nowrap">2.18 g</div>
<div class="a" style="left:1710px;top:209.5px;width:15px;height:15px;background:#555"></div>
<svg class="a" style="left:1710px;top:209.5px" width="15" height="15" viewBox="0 0 15 15"><path d="M2.5 8l3 3 6.5-6.5" stroke="#00ae42" stroke-width="2" fill="none"/></svg>
<div class="a" style="left:1337px;top:233.5px;width:9px;height:9px;background:#9654cc"></div>
<div class="a" style="left:1354px;top:229.5px;line-height:17px;font-size:13px;color:#eee;white-space:nowrap">Internal solid infill</div>
<div class="a" style="left:1465px;top:229.5px;line-height:17px;font-size:13px;color:#eee;white-space:nowrap">6m52s</div>
<div class="a" style="left:1527px;top:229.5px;line-height:17px;font-size:13px;color:#eee;white-space:nowrap">10.0%</div>
<div class="a" style="left:1588px;top:229.5px;line-height:17px;font-size:13px;color:#eee;white-space:nowrap">0.75 m</div>
<div class="a" style="left:1636px;top:229.5px;line-height:17px;font-size:13px;color:#eee;white-space:nowrap">2.38 g</div>
<div class="a" style="left:1710px;top:230.5px;width:15px;height:15px;background:#555"></div>
<svg class="a" style="left:1710px;top:230.5px" width="15" height="15" viewBox="0 0 15 15"><path d="M2.5 8l3 3 6.5-6.5" stroke="#00ae42" stroke-width="2" fill="none"/></svg>
<div class="a" style="left:1337px;top:254.5px;width:9px;height:9px;background:#f04040"></div>
<div class="a" style="left:1354px;top:250.5px;line-height:17px;font-size:13px;color:#eee;white-space:nowrap">Top surface</div>
<div class="a" style="left:1465px;top:250.5px;line-height:17px;font-size:13px;color:#eee;white-space:nowrap">50s</div>
<div class="a" style="left:1527px;top:250.5px;line-height:17px;font-size:13px;color:#eee;white-space:nowrap">1.2%</div>
<div class="a" style="left:1588px;top:250.5px;line-height:17px;font-size:13px;color:#eee;white-space:nowrap">0.08 m</div>
<div class="a" style="left:1636px;top:250.5px;line-height:17px;font-size:13px;color:#eee;white-space:nowrap">0.27 g</div>
<div class="a" style="left:1710px;top:251.5px;width:15px;height:15px;background:#555"></div>
<svg class="a" style="left:1710px;top:251.5px" width="15" height="15" viewBox="0 0 15 15"><path d="M2.5 8l3 3 6.5-6.5" stroke="#00ae42" stroke-width="2" fill="none"/></svg>
<div class="a" style="left:1337px;top:275.5px;width:9px;height:9px;background:#7161d9"></div>
<div class="a" style="left:1354px;top:271.5px;line-height:17px;font-size:13px;color:#eee;white-space:nowrap">Bottom surface</div>
<div class="a" style="left:1465px;top:271.5px;line-height:17px;font-size:13px;color:#eee;white-space:nowrap">35s</div>
<div class="a" style="left:1527px;top:271.5px;line-height:17px;font-size:13px;color:#eee;white-space:nowrap">0.9%</div>
<div class="a" style="left:1588px;top:271.5px;line-height:17px;font-size:13px;color:#eee;white-space:nowrap">0.03 m</div>
<div class="a" style="left:1636px;top:271.5px;line-height:17px;font-size:13px;color:#eee;white-space:nowrap">0.11 g</div>
<div class="a" style="left:1710px;top:272.5px;width:15px;height:15px;background:#555"></div>
<svg class="a" style="left:1710px;top:272.5px" width="15" height="15" viewBox="0 0 15 15"><path d="M2.5 8l3 3 6.5-6.5" stroke="#00ae42" stroke-width="2" fill="none"/></svg>
<div class="a" style="left:1337px;top:296.5px;width:9px;height:9px;background:#4d80ba"></div>
<div class="a" style="left:1354px;top:292.5px;line-height:17px;font-size:13px;color:#eee;white-space:nowrap">Bridge</div>
<div class="a" style="left:1465px;top:292.5px;line-height:17px;font-size:13px;color:#eee;white-space:nowrap">1m32s</div>
<div class="a" style="left:1527px;top:292.5px;line-height:17px;font-size:13px;color:#eee;white-space:nowrap">2.3%</div>
<div class="a" style="left:1588px;top:292.5px;line-height:17px;font-size:13px;color:#eee;white-space:nowrap">0.20 m</div>
<div class="a" style="left:1636px;top:292.5px;line-height:17px;font-size:13px;color:#eee;white-space:nowrap">0.64 g</div>
<div class="a" style="left:1710px;top:293.5px;width:15px;height:15px;background:#555"></div>
<svg class="a" style="left:1710px;top:293.5px" width="15" height="15" viewBox="0 0 15 15"><path d="M2.5 8l3 3 6.5-6.5" stroke="#00ae42" stroke-width="2" fill="none"/></svg>
<div class="a" style="left:1337px;top:317.5px;width:9px;height:9px;background:#ffffff"></div>
<div class="a" style="left:1354px;top:313.5px;line-height:17px;font-size:13px;color:#eee;white-space:nowrap">Gap infill</div>
<div class="a" style="left:1465px;top:313.5px;line-height:17px;font-size:13px;color:#eee;white-space:nowrap">6s</div>
<div class="a" style="left:1527px;top:313.5px;line-height:17px;font-size:13px;color:#eee;white-space:nowrap">0.2%</div>
<div class="a" style="left:1588px;top:313.5px;line-height:17px;font-size:13px;color:#eee;white-space:nowrap">0.00 m</div>
<div class="a" style="left:1636px;top:313.5px;line-height:17px;font-size:13px;color:#eee;white-space:nowrap">0.01 g</div>
<div class="a" style="left:1710px;top:314.5px;width:15px;height:15px;background:#555"></div>
<svg class="a" style="left:1710px;top:314.5px" width="15" height="15" viewBox="0 0 15 15"><path d="M2.5 8l3 3 6.5-6.5" stroke="#00ae42" stroke-width="2" fill="none"/></svg>
<div class="a" style="left:1337px;top:338.5px;width:9px;height:9px;background:#00ff00"></div>
<div class="a" style="left:1354px;top:334.5px;line-height:17px;font-size:13px;color:#eee;white-space:nowrap">Support</div>
<div class="a" style="left:1465px;top:334.5px;line-height:17px;font-size:13px;color:#eee;white-space:nowrap">11m13s</div>
<div class="a" style="left:1527px;top:334.5px;line-height:17px;font-size:13px;color:#eee;white-space:nowrap">16.4%</div>
<div class="a" style="left:1588px;top:334.5px;line-height:17px;font-size:13px;color:#eee;white-space:nowrap">1.17 m</div>
<div class="a" style="left:1636px;top:334.5px;line-height:17px;font-size:13px;color:#eee;white-space:nowrap">3.71 g</div>
<div class="a" style="left:1710px;top:335.5px;width:15px;height:15px;background:#555"></div>
<svg class="a" style="left:1710px;top:335.5px" width="15" height="15" viewBox="0 0 15 15"><path d="M2.5 8l3 3 6.5-6.5" stroke="#00ae42" stroke-width="2" fill="none"/></svg>
<div class="a" style="left:1337px;top:359.5px;width:9px;height:9px;background:#008000"></div>
<div class="a" style="left:1354px;top:355.5px;line-height:17px;font-size:13px;color:#eee;white-space:nowrap">Support interface</div>
<div class="a" style="left:1465px;top:355.5px;line-height:17px;font-size:13px;color:#eee;white-space:nowrap">53s</div>
<div class="a" style="left:1527px;top:355.5px;line-height:17px;font-size:13px;color:#eee;white-space:nowrap">1.3%</div>
<div class="a" style="left:1588px;top:355.5px;line-height:17px;font-size:13px;color:#eee;white-space:nowrap">0.09 m</div>
<div class="a" style="left:1636px;top:355.5px;line-height:17px;font-size:13px;color:#eee;white-space:nowrap">0.28 g</div>
<div class="a" style="left:1710px;top:356.5px;width:15px;height:15px;background:#555"></div>
<svg class="a" style="left:1710px;top:356.5px" width="15" height="15" viewBox="0 0 15 15"><path d="M2.5 8l3 3 6.5-6.5" stroke="#00ae42" stroke-width="2" fill="none"/></svg>
<div class="a" style="left:1337px;top:380.5px;width:9px;height:9px;background:#004a12"></div>
<div class="a" style="left:1354px;top:376.5px;line-height:17px;font-size:13px;color:#eee;white-space:nowrap">Support transition</div>
<div class="a" style="left:1465px;top:376.5px;line-height:17px;font-size:13px;color:#eee;white-space:nowrap">1m3s</div>
<div class="a" style="left:1527px;top:376.5px;line-height:17px;font-size:13px;color:#eee;white-space:nowrap">1.5%</div>
<div class="a" style="left:1588px;top:376.5px;line-height:17px;font-size:13px;color:#eee;white-space:nowrap">0.08 m</div>
<div class="a" style="left:1636px;top:376.5px;line-height:17px;font-size:13px;color:#eee;white-space:nowrap">0.27 g</div>
<div class="a" style="left:1710px;top:377.5px;width:15px;height:15px;background:#555"></div>
<svg class="a" style="left:1710px;top:377.5px" width="15" height="15" viewBox="0 0 15 15"><path d="M2.5 8l3 3 6.5-6.5" stroke="#00ae42" stroke-width="2" fill="none"/></svg>
<div class="a" style="left:1337px;top:401.5px;width:9px;height:9px;background:#5ed194"></div>
<div class="a" style="left:1354px;top:397.5px;line-height:17px;font-size:13px;color:#eee;white-space:nowrap">Custom</div>
<div class="a" style="left:1465px;top:397.5px;line-height:17px;font-size:13px;color:#eee;white-space:nowrap">5m54s</div>
<div class="a" style="left:1527px;top:397.5px;line-height:17px;font-size:13px;color:#eee;white-space:nowrap">8.6%</div>
<div class="a" style="left:1588px;top:397.5px;line-height:17px;font-size:13px;color:#eee;white-space:nowrap">0.02 m</div>
<div class="a" style="left:1636px;top:397.5px;line-height:17px;font-size:13px;color:#eee;white-space:nowrap">0.08 g</div>
<div class="a" style="left:1710px;top:398.5px;width:15px;height:15px;background:#555"></div>
<svg class="a" style="left:1710px;top:398.5px" width="15" height="15" viewBox="0 0 15 15"><path d="M2.5 8l3 3 6.5-6.5" stroke="#00ae42" stroke-width="2" fill="none"/></svg>
<div class="a" style="left:1337px;top:422.5px;width:9px;height:9px;background:#38489b"></div>
<div class="a" style="left:1354px;top:418.5px;line-height:17px;font-size:13px;color:#eee;white-space:nowrap">Travel</div>
<div class="a" style="left:1465px;top:418.5px;line-height:17px;font-size:13px;color:#eee;white-space:nowrap">13m35s</div>
<div class="a" style="left:1527px;top:418.5px;line-height:17px;font-size:13px;color:#eee;white-space:nowrap">19.8%</div>
<div class="a" style="left:1710px;top:419.5px;width:15px;height:15px;background:#555"></div>
<div class="a" style="left:1337px;top:443.5px;width:9px;height:9px;background:#d622d6"></div>
<div class="a" style="left:1354px;top:439.5px;line-height:17px;font-size:13px;color:#eee;white-space:nowrap">Retract</div>
<div class="a" style="left:1710px;top:440.5px;width:15px;height:15px;background:#555"></div>
<div class="a" style="left:1337px;top:464.5px;width:9px;height:9px;background:#49adcf"></div>
<div class="a" style="left:1354px;top:460.5px;line-height:17px;font-size:13px;color:#eee;white-space:nowrap">Unretract</div>
<div class="a" style="left:1710px;top:461.5px;width:15px;height:15px;background:#555"></div>
<div class="a" style="left:1337px;top:485.5px;width:9px;height:9px;background:#ffff00"></div>
<div class="a" style="left:1354px;top:481.5px;line-height:17px;font-size:13px;color:#eee;white-space:nowrap">Wipe</div>
<div class="a" style="left:1710px;top:482.5px;width:15px;height:15px;background:#555"></div>
<div class="a" style="left:1337px;top:506.5px;width:9px;height:9px;background:#e6e6e6"></div>
<div class="a" style="left:1354px;top:502.5px;line-height:17px;font-size:13px;color:#eee;white-space:nowrap">Seams</div>
<div class="a" style="left:1710px;top:503.5px;width:15px;height:15px;background:#555"></div>
<svg class="a" style="left:1710px;top:503.5px" width="15" height="15" viewBox="0 0 15 15"><path d="M2.5 8l3 3 6.5-6.5" stroke="#00ae42" stroke-width="2" fill="none"/></svg>
<div class="a" style="left:1334px;top:438px;width:440px;height:21px;border:1px solid #00ae42"></div>
<div class="a" style="left:1336px;top:533px;line-height:17px;font-size:13px;font-weight:bold;color:#fff">Total Estimation</div>
<div class="a" style="left:1324px;top:553px;width:459px;height:1px;background:#cfcfcf"></div>
<div class="a" style="left:1336px;top:556.5px;line-height:17px;font-size:12.5px;color:#eee;white-space:nowrap">Total Filament:</div>
<div class="a" style="left:1505px;top:556.5px;line-height:17px;font-size:12.5px;color:#eee;white-space:nowrap">5.15 m</div>
<div class="a" style="left:1560px;top:556.5px;line-height:17px;font-size:12.5px;color:#eee;white-space:nowrap">16.35 g</div>
<div class="a" style="left:1336px;top:575.5px;line-height:17px;font-size:12.5px;color:#eee;white-space:nowrap">Model Filament:</div>
<div class="a" style="left:1505px;top:575.5px;line-height:17px;font-size:12.5px;color:#eee;white-space:nowrap">3.81 m</div>
<div class="a" style="left:1560px;top:575.5px;line-height:17px;font-size:12.5px;color:#eee;white-space:nowrap">12.10 g</div>
<div class="a" style="left:1336px;top:594.5px;line-height:17px;font-size:12.5px;color:#eee;white-space:nowrap">Cost:</div>
<div class="a" style="left:1505px;top:594.5px;line-height:17px;font-size:12.5px;color:#eee;white-space:nowrap">0.49</div>
<div class="a" style="left:1336px;top:613.5px;line-height:17px;font-size:12.5px;color:#eee;white-space:nowrap">Prepare and timelapse time:</div>
<div class="a" style="left:1505px;top:613.5px;line-height:17px;font-size:12.5px;color:#eee;white-space:nowrap">6m4s + 2m13s</div>
<div class="a" style="left:1336px;top:632.5px;line-height:17px;font-size:12.5px;color:#eee;white-space:nowrap">Model printing time:</div>
<div class="a" style="left:1505px;top:632.5px;line-height:17px;font-size:12.5px;color:#eee;white-space:nowrap">1h0m</div>
<div class="a" style="left:1336px;top:651.5px;line-height:17px;font-size:12.5px;color:#eee;white-space:nowrap">Total time:</div>
<div class="a" style="left:1505px;top:651.5px;line-height:17px;font-size:12.5px;color:#eee;white-space:nowrap">1h9m</div>
<!--/PANEL-->
</body></html>
